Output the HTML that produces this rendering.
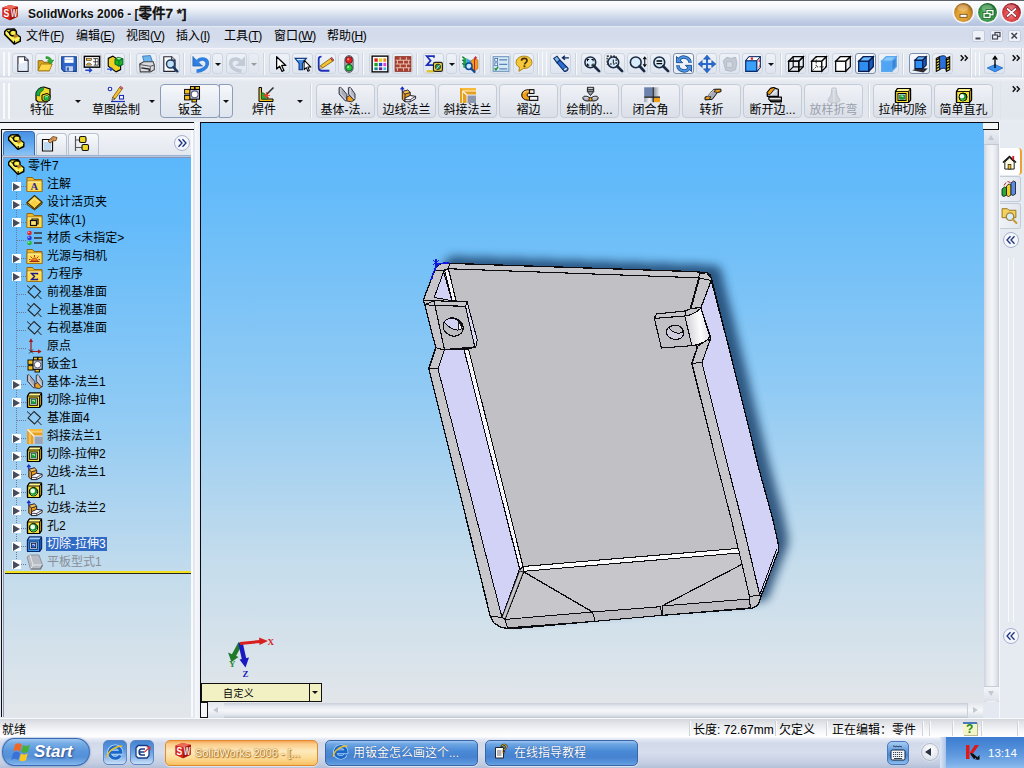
<!DOCTYPE html>
<html lang="zh-CN"><head><meta charset="utf-8"><title>SolidWorks 2006 - [零件7 *]</title>
<style>
*{box-sizing:border-box;margin:0;padding:0}
html,body{width:1024px;height:768px;overflow:hidden;background:#e3e8f0}
body{position:relative;font:12px/14px "Liberation Sans","Noto Sans CJK SC",sans-serif;color:#000}
.a{position:absolute}
.t{position:absolute;white-space:nowrap}
svg{position:absolute;overflow:visible}
#title{left:0;top:0;width:1024px;height:26px;background:linear-gradient(#5e646c 0,#5e646c 1px,#fdfeff 1px,#f2f5fa 8px,#d6dfee 15px,#bfcce3 21px,#b5c4de 25px,#bac8e0 26px)}
#title .tx{left:28px;top:6px;font:bold 12px/16px "Liberation Sans","Noto Sans CJK SC",sans-serif;color:#111;text-shadow:1px 1px 1px rgba(255,255,255,.7)}
#menu{left:0;top:26px;width:1024px;height:22px;background:linear-gradient(#e8edf6 0,#d3dbec 2px,#d4dcec 12px,#dbe2ef 20px,#e0e6f0 22px)}
#menu .t{top:3px;line-height:15px}
#tb1{left:0;top:48px;width:1024px;height:31px;background:linear-gradient(#f6f8fb 0,#e7ebf2 2px,#e1e6ee 26px,#d4dae4 29px,#f4f6fa 30px)}
#tb2{left:0;top:79px;width:1024px;height:43px;background:linear-gradient(#eef1f6 0,#e4e8ef 3px,#e2e6ed 38px,#e9edf3 43px)}
.b1{position:absolute;top:5px;width:21px;height:21px;border:1px solid #cdd5e1;border-radius:3px;background:linear-gradient(#eef2f8,#dfe5ef)}
.b1.on{border-color:#7d8ea8;background:linear-gradient(#f7f9fc,#e8edf5)}
.b1d{position:absolute;top:5px;width:11px;height:21px;border:1px solid #cdd5e1;border-radius:3px;background:linear-gradient(#eef2f8,#dfe5ef)}
.b1d:after,.dd:after{content:"";position:absolute;left:2px;top:9px;border:3px solid transparent;border-top:3px solid #111;border-bottom:0}
.sep1{position:absolute;top:5px;width:2px;height:22px;border-left:1px solid #cfd6e0;border-right:1px solid #f7f9fc}
.grip{position:absolute;width:7px;border-left:2px solid #f8fafc;border-right:2px solid #f8fafc}
.b2{position:absolute;top:5px;width:59px;height:34px;border:1px solid #c5ccd8;border-radius:4px;background:linear-gradient(#f0f2f7,#e4e8ef 55%,#dadfe8);text-align:center}
.b2 .l{position:absolute;left:-10px;right:-10px;top:18px;text-align:center;font-size:12px;line-height:14px;white-space:nowrap}
.b2 svg{left:20px;top:1px}
.g2{position:absolute;top:5px;height:34px;text-align:center}
.g2 .l{position:absolute;left:-20px;right:-20px;top:19px;text-align:center;white-space:nowrap}
.dd{position:absolute;width:9px;height:9px}
.dd:after{left:1px;top:3px;border-width:3px 3px 0 3px;border-top-color:#111}
.chev{position:absolute;font:bold 12px/12px "Liberation Sans",sans-serif;letter-spacing:-2px;color:#111}
</style></head><body>
<div id="title" class="a"><svg style="left:2px;top:4px" width="17" height="17" viewBox="0 0 16 16" ><path d="M.500 3.300L6.900.900l8 1.800-.300 9.400-7.100 3.300-7-3.300z" fill="#c81c14"/><path d="M.500 3.300L6.900.900l8 1.800-6.800 2.400z" fill="#ec6a58"/><path d="M8.100 5.100l6.800-2.400-.300 9.400-7.100 3.300z" fill="#a01410"/><path d="M.500 3.300l7.600 1.800-.600 10.300-7-3.300z" fill="#d4241a"/><text x="1.300" y="12.600" font-family="Liberation Sans,sans-serif" font-weight="bold" font-size="10.500" textLength="5.400" lengthAdjust="spacingAndGlyphs" fill="#fff">S</text><text x="8.300" y="12" font-family="Liberation Sans,sans-serif" font-weight="bold" font-size="9.500" textLength="6.200" lengthAdjust="spacingAndGlyphs" fill="#f4e4e0">W</text></svg><div class="t tx">SolidWorks 2006 - [<span style="font-size:13.500px;-webkit-text-stroke:.300px #111">零件7 *]</span></div><svg style="left:951.5px;top:1px" width="23" height="23" viewBox="0 0 23 23"><defs><radialGradient id="g963" cx=".45" cy=".6" r=".6"><stop offset="0" stop-color="#f0b848"/><stop offset=".55" stop-color="#dc9c30"/><stop offset=".85" stop-color="#b87a24"/><stop offset="1" stop-color="#80561c"/></radialGradient></defs><circle cx="11.500" cy="11.500" r="11" fill="#fff" opacity=".75"/><circle cx="11.500" cy="11.500" r="9.400" fill="url(#g963)"/><ellipse cx="11" cy="7" rx="5.500" ry="3.500" fill="#fff" opacity=".25"/><rect x="8" y="13.300" width="7" height="3" fill="#fff" stroke="#6a4410" stroke-width=".800"/></svg><svg style="left:975.5px;top:1px" width="23" height="23" viewBox="0 0 23 23"><defs><radialGradient id="g987" cx=".45" cy=".6" r=".6"><stop offset="0" stop-color="#7cc488"/><stop offset=".55" stop-color="#3c9c4c"/><stop offset=".85" stop-color="#2a8038"/><stop offset="1" stop-color="#145a24"/></radialGradient></defs><circle cx="11.500" cy="11.500" r="11" fill="#fff" opacity=".75"/><circle cx="11.500" cy="11.500" r="9.400" fill="url(#g987)"/><ellipse cx="11" cy="7" rx="5.500" ry="3.500" fill="#fff" opacity=".25"/><rect x="11" y="9.500" width="6" height="4.300" fill="none" stroke="#0c4a1c" stroke-width="2.600"/><rect x="8" y="12.500" width="6" height="4" fill="none" stroke="#0c4a1c" stroke-width="2.600"/><rect x="11" y="9.500" width="6" height="4.300" fill="#2a8038" stroke="#fff" stroke-width="1.300"/><rect x="8" y="12.500" width="6" height="4" fill="#2a8038" stroke="#fff" stroke-width="1.300"/></svg><svg style="left:999.5px;top:1px" width="23" height="23" viewBox="0 0 23 23"><defs><radialGradient id="g1011" cx=".45" cy=".6" r=".6"><stop offset="0" stop-color="#f08888"/><stop offset=".55" stop-color="#e04848"/><stop offset=".85" stop-color="#c02c34"/><stop offset="1" stop-color="#7c1424"/></radialGradient></defs><circle cx="11.500" cy="11.500" r="11" fill="#fff" opacity=".75"/><circle cx="11.500" cy="11.500" r="9.400" fill="url(#g1011)"/><ellipse cx="11" cy="7" rx="5.500" ry="3.500" fill="#fff" opacity=".25"/><path d="M7.500 8l8 7M15.500 8l-8 7" stroke="#7c1424" stroke-width="3.200" stroke-linecap="round"/><path d="M7.500 8l8 7M15.500 8l-8 7" stroke="#fff" stroke-width="1.800" stroke-linecap="round"/></svg></div><div id="menu" class="a"><svg style="left:4px;top:2px" width="17" height="17" viewBox="0 0 16.500 16" ><path d="M.7 3.200L3 .900l7-.300 2 2.600v2.800l3.800 2.500v4L10 15.400.700 6z" fill="#f6e428" stroke="#000" stroke-width="1.400" stroke-linejoin="round"/><path d="M1.800 3.800l8.400 8.200 5-2.800" fill="none" stroke="#fffbb0" stroke-width="1.100"/><path d="M10.200 12v3" stroke="#000" stroke-width="1.100"/><path d="M8 7l3.500-1.500 2.500 2-3.500 2z" fill="#b8802c"/><path d="M7.800 3c1.500-.600 3.200.400 2.700 2-.400 1.200-2 1.600-3 .900z" fill="#f8f060"/><path d="M10.800 2.400c-2.500-1.700-6.200.300-5.200 3.100.500 1.500 2.200 2.100 3.700 1.500" fill="none" stroke="#000" stroke-width="1.400"/><path d="M3 2.500l2.500 2.500" stroke="#000" stroke-width="1"/></svg><div class="t" style="left:26px">文件<span style="letter-spacing:-.5px">(<u>F</u>)</span></div><div class="t" style="left:76px">编辑<span style="letter-spacing:-.5px">(<u>E</u>)</span></div><div class="t" style="left:126px">视图<span style="letter-spacing:-.5px">(<u>V</u>)</span></div><div class="t" style="left:176px">插入<span style="letter-spacing:-.5px">(<u>I</u>)</span></div><div class="t" style="left:224px">工具<span style="letter-spacing:-.5px">(<u>T</u>)</span></div><div class="t" style="left:274px">窗口<span style="letter-spacing:-.5px">(<u>W</u>)</span></div><div class="t" style="left:327px">帮助<span style="letter-spacing:-.5px">(<u>H</u>)</span></div><div class="a" style="left:972px;top:4px;width:13px;height:12px;border:1px solid #c2ccda;border-radius:2px;background:#eef2f8"></div><svg style="left:972px;top:4px" width="13" height="12" viewBox="0 0 13 12" ><rect x="3.500" y="7.500" width="5" height="2" fill="#445"/></svg><div class="a" style="left:990px;top:4px;width:13px;height:12px;border:1px solid #c2ccda;border-radius:2px;background:#eef2f8"></div><svg style="left:990px;top:4px" width="13" height="12" viewBox="0 0 13 12" ><rect x="5" y="2.500" width="5" height="4" fill="none" stroke="#445" stroke-width="1.200"/><rect x="2.500" y="5" width="5" height="4" fill="#eef2f8" stroke="#445" stroke-width="1.200"/></svg><div class="a" style="left:1008px;top:4px;width:13px;height:12px;border:1px solid #c2ccda;border-radius:2px;background:#eef2f8"></div><svg style="left:1008px;top:4px" width="13" height="12" viewBox="0 0 13 12" ><path d="M3.500 3l5.500 5.500M9 3L3.500 8.500" stroke="#445" stroke-width="1.600"/></svg></div><div id="tb1" class="a"><div class="grip" style="left:3px;top:4px;height:24px"></div><div class="b1" style="left:12px"></div><svg style="left:13.5px;top:6.5px" width="18" height="18" viewBox="0 0 16 16" ><path d="M3.5 1.5h6l3 3v10h-9z" fill="#fff" stroke="#223" stroke-width="1"/><path d="M9.5 1.5v3h3" fill="#dfe8f5" stroke="#223"/><path d="M4 8l8-2v8H4z" fill="#dbe7f6" opacity=".8"/></svg><div class="b1" style="left:35px"></div><svg style="left:36.5px;top:6.5px" width="18" height="18" viewBox="0 0 16 16" ><path d="M1 5h4l1 1.5h5V14H1z" fill="#d9a520" stroke="#8a6208" stroke-width=".8"/><path d="M1 14l2.5-6h10L11 14z" fill="#ffd84a" stroke="#a47810" stroke-width=".8"/><path d="M8 1.5c3 0 4.500 1 5 3.500l1.800-.5-2.500 3.500-3-2.800 1.800-.2c-.4-1.500-1.600-2-3.100-2z" fill="#2fb52f" stroke="#137a13" stroke-width=".6"/></svg><div class="b1" style="left:58px"></div><svg style="left:59.5px;top:6.5px" width="18" height="18" viewBox="0 0 16 16" ><path d="M1.500 1.500h13v13h-11l-2-2z" fill="#2d66c8" stroke="#173f8e"/><rect x="4" y="2" width="8" height="5" fill="#fff"/><rect x="4.500" y="3.500" width="7" height="1" fill="#c9d5ea"/><rect x="5" y="10" width="6.500" height="4.500" fill="#c8d2e4"/><rect x="6" y="11" width="2" height="3" fill="#2d66c8"/></svg><div class="b1" style="left:81px"></div><svg style="left:82.5px;top:6.5px" width="18" height="18" viewBox="0 0 16 16" ><rect x="1.200" y="1.200" width="13.600" height="9.600" fill="#fff" stroke="#000" stroke-width="1.300"/><rect x="3" y="3" width="4.500" height="2" fill="#f0c040" stroke="#222" stroke-width=".500"/><path d="M9 3.200h4.500v5.800H9.500M11 3.200v5.800M9 6h4.500" fill="none" stroke="#222" stroke-width=".700"/><path d="M3 9c0-2.500 4.500-2.500 4.500 0z" fill="#f0c040" stroke="#222" stroke-width=".500"/><path d="M2 13.500h5M5.500 11.800l2 1.700-2 1.700" fill="none" stroke="#2244cc" stroke-width="1.300"/></svg><div class="b1" style="left:104px"></div><svg style="left:105.5px;top:6.5px" width="18" height="18" viewBox="0 0 16 16" ><path d="M2 3l4-2 3 2v3l4 3v4l-4 2-7-5z" fill="#f0d020" stroke="#000" stroke-width="1"/><path d="M8 4l3-2 4 1.500v5L11.500 10 8 8z" fill="#22b422" stroke="#063" stroke-width=".9"/><path d="M8 4l3.500 1.300L15 3.500M11.500 5.300V10" fill="none" stroke="#063" stroke-width=".7"/><path d="M9.500 3l2-.8 2 .8-2 .9z" fill="#aef0ae"/><path d="M1 12.500h4M3.800 10.900l1.800 1.600-1.800 1.600" fill="none" stroke="#2244cc" stroke-width="1.200"/></svg><div class="sep1" style="left:129px"></div><div class="b1" style="left:136px"></div><svg style="left:137.5px;top:6.5px" width="18" height="18" viewBox="0 0 16 16" ><path d="M4 1l7-.5 2 6H5.500z" fill="#6ab4f0" stroke="#2a6cb0" stroke-width=".7"/><path d="M1.500 8l3.500-2h8.500l1 3v4l-3.500 2H2z" fill="#d8dce2" stroke="#444" stroke-width=".9"/><path d="M1.500 8.500l9.500 1.500 3.500-1" fill="none" stroke="#444" stroke-width=".8"/><path d="M3 11.500l7 1v2" fill="none" stroke="#222" stroke-width="1.200"/><path d="M11 10v5" stroke="#555" stroke-width=".7"/></svg><div class="b1" style="left:159px"></div><svg style="left:160.5px;top:6.5px" width="18" height="18" viewBox="0 0 16 16" ><path d="M2.500 1.500h7l3 3v10h-10z" fill="#fff" stroke="#223"/><path d="M9.500 1.500v3h3" fill="#e4ebf6" stroke="#223"/><circle cx="8.500" cy="8" r="3.600" fill="#bfe0f7" stroke="#1d3a63" stroke-width="1.300"/><path d="M11 10.800l3.500 3.700" stroke="#1d3a63" stroke-width="2.200" stroke-linecap="round"/></svg><div class="sep1" style="left:183px"></div><div class="b1" style="left:190px"></div><svg style="left:191.5px;top:6.5px" width="18" height="18" viewBox="0 0 16 16" ><path d="M5 5.500C8 2 14.500 3.500 13.500 8.500 13 11.500 9 14 4 14.500" fill="none" stroke="#2f7fe0" stroke-width="3.200"/><path d="M.800 1v8.800h8.800z" fill="#2f7fe0"/><path d="M.800 1v8.800h8.800" fill="none" stroke="#1a55a8" stroke-width=".600"/></svg><div class="b1d" style="left:212px"></div><div class="b1" style="left:226px"></div><svg style="left:227.5px;top:6.5px" width="18" height="18" viewBox="0 0 16 16" ><path d="M11 5.500C8 2 1.500 3.500 2.500 8.500 3 11.500 7 14 12 14.500" fill="none" stroke="#c4cbd6" stroke-width="3.200"/><path d="M15.200 1v8.800H6.400z" fill="#c4cbd6"/></svg><div class="b1d" style="left:248px;opacity:.35"></div><div class="sep1" style="left:263px"></div><div class="b1" style="left:269px"></div><svg style="left:270.5px;top:6.5px" width="18" height="18" viewBox="0 0 16 16" ><path d="M5 1.500v11l2.700-2.500 2 4.500 1.800-.8-2-4.400h3.700z" fill="#fff" stroke="#000" stroke-width="1.100" stroke-linejoin="round"/></svg><div class="b1" style="left:292px"></div><svg style="left:293.5px;top:6.5px" width="18" height="18" viewBox="0 0 16 16" ><path d="M1 3h10L7.500 7.500V13h-3V7.500z" fill="#3f8ae0" stroke="#0d3a80" stroke-width="1"/><path d="M2.500 4h7" stroke="#cfe4ff" stroke-width="1"/><path d="M9 4.500v8.500l2-1.800 1.400 3.300 1.300-.6-1.400-3.200h2.700z" fill="#fff" stroke="#000" stroke-width=".9" stroke-linejoin="round"/></svg><div class="b1" style="left:315px"></div><svg style="left:316.5px;top:6.5px" width="18" height="18" viewBox="0 0 16 16" ><path d="M11 14H4.500C2.500 14 1.500 13 1.500 11V3.500C1.500 2 2.500 1.500 4 1.500" fill="none" stroke="#1c2fb8" stroke-width="1.600"/><path d="M3 9.500L12 3l2 2.500L5 11.500z" fill="#f2c330" stroke="#7a5a08" stroke-width=".7"/><path d="M12 3l1-1 2 2.500-1 1z" fill="#e05858" stroke="#7a2a2a" stroke-width=".6"/><path d="M3 9.500l-.8 2.600L5 11.500z" fill="#f3dcb0" stroke="#7a5a08" stroke-width=".5"/></svg><div class="b1" style="left:338px"></div><svg style="left:339.5px;top:6.5px" width="18" height="18" viewBox="0 0 16 16" ><rect x="4.300" y="0.500" width="7.400" height="15" rx="3.700" fill="#a8acb4" stroke="#5a5e68" stroke-width=".800"/><circle cx="8" cy="4.500" r="3" fill="#e82020" stroke="#4a1010" stroke-width=".700"/><circle cx="8" cy="11.300" r="3" fill="#22c83c" stroke="#0a3a14" stroke-width=".700"/><circle cx="7.300" cy="3.800" r=".9" fill="#ff9a9a"/><circle cx="7.300" cy="10.600" r=".9" fill="#b4ffb4"/></svg><div class="sep1" style="left:362px"></div><div class="b1" style="left:369px"></div><svg style="left:370.5px;top:6.5px" width="18" height="18" viewBox="0 0 16 16" ><rect x="1" y="1" width="14" height="14" fill="#fff" stroke="#000" stroke-width="1.200"/><rect x="3" y="3" width="3" height="3" fill="#e02020"/><rect x="7" y="3" width="3" height="3" fill="#e8d020"/><rect x="11" y="3" width="2.500" height="3" fill="#e88a20"/><rect x="3" y="7" width="3" height="3" fill="#20a020"/><rect x="7" y="7" width="3" height="3" fill="#2040d0"/><rect x="11" y="7" width="2.500" height="3" fill="#e040e0"/><rect x="3" y="11" width="3" height="2.500" fill="#108a8a"/><rect x="7" y="11" width="3" height="2.500" fill="#702090"/><rect x="11" y="11" width="2.500" height="2.500" fill="#40c0e0"/></svg><div class="b1" style="left:392px"></div><svg style="left:393.5px;top:6.5px" width="18" height="18" viewBox="0 0 16 16" ><rect x="1" y="1.500" width="14" height="13" fill="#a8402f"/><path d="M1 4.700h14M1 8h14M1 11.300h14M5.500 1.500v3.200M11 1.500v3.200M3 4.700V8M8.500 4.700V8M13 4.700V8M5.500 8v3.300M11 8v3.300M3 11.300v3.200M8.500 11.300v3.200M13 11.300v3.200" stroke="#e8c0b4" stroke-width=".9"/><rect x="1" y="1.500" width="14" height="13" fill="none" stroke="#8a2c24" stroke-width=".8"/></svg><div class="sep1" style="left:416px"></div><div class="b1" style="left:423px"></div><svg style="left:424.5px;top:6.5px" width="18" height="18" viewBox="0 0 16 16" ><path d="M8 2.500V1H1.500l3.500 4-3.500 4H8V7.500" fill="none" stroke="#1c2fb8" stroke-width="1.500"/><path d="M1.500 14.500H8" stroke="#e0c020" stroke-width="2"/><rect x="7.500" y="6.500" width="8" height="8" rx="1.500" fill="#e8d040" stroke="#222" stroke-width="1"/><circle cx="11.500" cy="10.500" r="2.400" fill="#3a8a5a" stroke="#222" stroke-width=".7"/><path d="M10 12.500l3-3.500" stroke="#9fd" stroke-width=".8"/></svg><div class="b1d" style="left:446px"></div><div class="b1" style="left:459px"></div><svg style="left:460.5px;top:6.5px" width="18" height="18" viewBox="0 0 16 16" ><path d="M2 2l3 1v9l-3-1z" fill="#20a840"/><path d="M5 3l4 2v8l-4-1z" fill="#38a0e8"/><path d="M9 5l3-2 3 1.500V12l-3 2.500-3-1.500z" fill="#f0a020" stroke="#a05808" stroke-width=".5"/><path d="M12 3v11" stroke="#d02020" stroke-width="1"/><path d="M1 1.500l2 1M1 4.500l2 1M1 7.500l2 1" stroke="#0a6a2a" stroke-width="1"/><circle cx="7" cy="10" r="2.800" fill="#c8e8ff" stroke="#114a9a" stroke-width="1.300"/><path d="M9 12l3 3" stroke="#114a9a" stroke-width="2" stroke-linecap="round"/><path d="M13 1v3M11.500 2.500h3" stroke="#c02020" stroke-width=".8"/></svg><div class="sep1" style="left:483px"></div><div class="b1" style="left:490px"></div><svg style="left:491.5px;top:6.5px" width="18" height="18" viewBox="0 0 16 16" ><rect x="1" y="1.500" width="14" height="13" fill="#d4e8f8" stroke="#6890b8" stroke-width=".9"/><rect x="2.500" y="3" width="2.500" height="2.500" fill="#fff" stroke="#3a66a0" stroke-width=".7"/><rect x="2.500" y="7" width="2.500" height="2.500" fill="#fff" stroke="#3a66a0" stroke-width=".7"/><path d="M2.300 11.800l1.200 1.400 2-2.800" fill="none" stroke="#1a8a2a" stroke-width="1.200"/><path d="M6.500 4.300h7M6.500 8.300h7M6.500 12.300h7" stroke="#5a84b4" stroke-width="1"/></svg><div class="b1" style="left:513px"></div><svg style="left:514.5px;top:6.5px" width="18" height="18" viewBox="0 0 16 16" ><path d="M8 1C3.800 1 1 3.500 1 6.500c0 2 1.200 3.600 3 4.500L3.500 14.500 7.500 12c.2 0 .3 0 .5 0 4.200 0 7-2.500 7-5.500S12.200 1 8 1z" fill="#f4c838" stroke="#a87808" stroke-width=".8"/><path d="M5.800 5.200C5.800 3.800 6.800 3 8.200 3c1.500 0 2.500.8 2.500 2 0 1.800-2.200 1.700-2.200 3.500" fill="none" stroke="#4a3000" stroke-width="1.500"/><circle cx="8.400" cy="10" r=".95" fill="#4a3000"/></svg><div class="sep1" style="left:537px"></div><div class="grip" style="left:542px;top:4px;height:24px;width:5px;border-width:1px"></div><div class="b1" style="left:550px"></div><svg style="left:551.5px;top:6.5px" width="18" height="18" viewBox="0 0 16 16" ><path d="M1.500 3l3-2 2.500 3.500L4.500 7z" fill="#7ab8f0" stroke="#0d2a60" stroke-width=".9"/><path d="M4.500 7L7 4.500l7 7c.8.800 0 2.300-1 2.800-1.200.6-2.300.3-2.800-.5z" fill="#2a70d8" stroke="#0d2a60" stroke-width=".9"/><ellipse cx="12" cy="12.500" rx="2" ry="1.400" transform="rotate(-40 12 12.500)" fill="#c8e4ff" stroke="#0d2a60" stroke-width=".7"/><path d="M15 2.500H9.500M11.500.700L9.300 2.500l2.200 1.800" fill="none" stroke="#0d2a60" stroke-width="1.200"/></svg><div class="sep1" style="left:575px"></div><div class="b1" style="left:581px"></div><svg style="left:582.5px;top:6.5px" width="18" height="18" viewBox="0 0 16 16" ><circle cx="6.500" cy="6.500" r="4.800" fill="#d8ecfb" stroke="#1a2a44" stroke-width="1.400"/><path d="M10 10l4.300 4.300" stroke="#1a2a44" stroke-width="2.400" stroke-linecap="round"/><path d="M4 5.500V4h1.500M7.500 4H9v1.500M9 7.500V9H7.500M5.500 9H4V7.500" fill="none" stroke="#000" stroke-width=".9"/></svg><div class="b1" style="left:604px"></div><svg style="left:605.5px;top:6.5px" width="18" height="18" viewBox="0 0 16 16" ><circle cx="6.500" cy="6.500" r="4.800" fill="#d8ecfb" stroke="#1a2a44" stroke-width="1.400"/><path d="M10 10l4.300 4.300" stroke="#1a2a44" stroke-width="2.400" stroke-linecap="round"/><rect x="1" y="1" width="8" height="7" fill="none" stroke="#000" stroke-width=".9" stroke-dasharray="1.500 1.200"/><path d="M6.500 4v3.500" stroke="#000" stroke-width=".8"/></svg><div class="b1" style="left:627px"></div><svg style="left:628.5px;top:6.5px" width="18" height="18" viewBox="0 0 16 16" ><circle cx="6" cy="6.500" r="4.800" fill="#d8ecfb" stroke="#1a2a44" stroke-width="1.400"/><path d="M9.500 10l4 4.300" stroke="#1a2a44" stroke-width="2.400" stroke-linecap="round"/><path d="M14 2v8M12.600 3.800L14 1.800l1.400 2M12.600 8.200L14 10.200l1.400-2" fill="none" stroke="#000" stroke-width=".9"/></svg><div class="b1" style="left:650px"></div><svg style="left:651.5px;top:6.5px" width="18" height="18" viewBox="0 0 16 16" ><circle cx="6.500" cy="6.500" r="4.800" fill="#d8ecfb" stroke="#1a2a44" stroke-width="1.400"/><path d="M10 10l4.300 4.300" stroke="#1a2a44" stroke-width="2.400" stroke-linecap="round"/><path d="M4 5.300h5M4 7.700h5" stroke="#000" stroke-width="1.200"/></svg><div class="b1 on" style="left:673px"></div><svg style="left:674.5px;top:6.5px" width="18" height="18" viewBox="0 0 16 16" ><path d="M13.500 7A5.600 5.600 0 0 0 3.300 4.300" fill="none" stroke="#1a4a8a" stroke-width="3"/><path d="M2.500 9A5.600 5.600 0 0 0 12.700 11.700" fill="none" stroke="#1a4a8a" stroke-width="3"/><path d="M1.300 1.300v5.500h5.500z" fill="#4a90e0" stroke="#1a4a8a" stroke-width=".800"/><path d="M14.700 14.700V9.200H9.200z" fill="#4a90e0" stroke="#1a4a8a" stroke-width=".800"/><path d="M13.500 7A5.600 5.600 0 0 0 3.300 4.300" fill="none" stroke="#4a90e0" stroke-width="1.700"/><path d="M2.500 9A5.600 5.600 0 0 0 12.700 11.700" fill="none" stroke="#4a90e0" stroke-width="1.700"/></svg><div class="b1" style="left:696px"></div><svg style="left:697.5px;top:6.5px" width="18" height="18" viewBox="0 0 16 16" ><path d="M8 2v12M2 8h12" stroke="#2a6ad0" stroke-width="1.800"/><path d="M8 0l3.200 3.800H4.800zM8 16l3.200-3.800H4.800zM0 8l3.800-3.200v6.400zM16 8l-3.800-3.200v6.400z" fill="#2a6ad0" stroke="#1a4a9a" stroke-width=".400"/></svg><div class="b1" style="left:719px"></div><svg style="left:720.5px;top:6.5px" width="18" height="18" viewBox="0 0 16 16" ><path d="M2 5l3-3 4 1 4-1 1 5-1 6-4 1.500-5-1z" fill="#c4cad4" stroke="#b0b8c4" stroke-width=".8"/><path d="M5 6h5v5H5z" fill="#d8dce4" stroke="#b0b8c4" stroke-width=".7"/></svg><div class="b1" style="left:742px"></div><svg style="left:743.5px;top:6.5px" width="18" height="18" viewBox="0 0 16 16" ><path d="M1.500 5l3-3.500h10v9.500l-3 3.500h-10z" fill="#2d8cf0" stroke="#0a2a66" stroke-width="1"/><path d="M1.500 5h10l3-3.500M11.500 5v9.500" fill="none" stroke="#0a2a66" stroke-width="1"/><path d="M4.500 1.500h10l-3 3.500h-10z" fill="#fff" stroke="#0a2a66" stroke-width=".8"/><path d="M11.500 5l3-3.500v9.500l-3 3.500z" fill="#f4f4f8" stroke="#0a2a66" stroke-width=".8"/><path d="M12.500 5.500l1.500-1.800v2.500zM12.500 12l1.500-1.800V8z" fill="#e02020"/><path d="M6 2.200h2v2H6z" fill="#e02020"/><path d="M2.500 6l8 0v7.500h-8z" fill="#3aa0f8"/></svg><div class="b1d" style="left:765px"></div><div class="sep1" style="left:780px"></div><div class="b1" style="left:785px"></div><svg style="left:786.5px;top:6.5px" width="18" height="18" viewBox="0 0 16 16" ><path d="M1.500 5.500h9v9h-9z" fill="none" stroke="#000" stroke-width="1.100"/><path d="M1.500 5.500l4-4h9l-4 4z" fill="none" stroke="#000" stroke-width="1.100"/><path d="M10.500 5.500l4-4v9l-4 4z" fill="none" stroke="#000" stroke-width="1.100"/><path d="M5.500 1.500v9h9M5.500 10.500l-4 4" fill="none" stroke="#000" stroke-width="1"/></svg><div class="b1" style="left:808px"></div><svg style="left:809.5px;top:6.5px" width="18" height="18" viewBox="0 0 16 16" ><path d="M1.500 5.500h9v9h-9z" fill="#fff" stroke="#000" stroke-width="1.100"/><path d="M1.500 5.500l4-4h9l-4 4z" fill="#fff" stroke="#000" stroke-width="1.100"/><path d="M10.500 5.500l4-4v9l-4 4z" fill="#fff" stroke="#000" stroke-width="1.100"/><path d="M5.500 1.500v9h9M5.500 10.500l-4 4" fill="none" stroke="#000" stroke-width=".8" stroke-dasharray="1.200 1.200"/></svg><div class="b1" style="left:832px"></div><svg style="left:833.5px;top:6.5px" width="18" height="18" viewBox="0 0 16 16" ><path d="M1.500 5.500h9v9h-9z" fill="#fff" stroke="#000" stroke-width="1.100"/><path d="M1.500 5.500l4-4h9l-4 4z" fill="#fff" stroke="#000" stroke-width="1.100"/><path d="M10.500 5.500l4-4v9l-4 4z" fill="#f2f2f2" stroke="#000" stroke-width="1.100"/></svg><div class="b1 on" style="left:855px"></div><svg style="left:856.5px;top:6.5px" width="18" height="18" viewBox="0 0 16 16" ><path d="M1.500 5.500h9v9h-9z" fill="#2f8ff0" stroke="#06184a" stroke-width="1.100"/><path d="M1.500 5.500l4-4h9l-4 4z" fill="#6ab8ff" stroke="#06184a" stroke-width="1.100"/><path d="M10.500 5.500l4-4v9l-4 4z" fill="#1a5ab8" stroke="#06184a" stroke-width="1.100"/></svg><div class="b1" style="left:878px"></div><svg style="left:879.5px;top:6.5px" width="18" height="18" viewBox="0 0 16 16" ><path d="M1.500 5.500h9v9h-9z" fill="#4fa4f4" stroke="#5aa8f0" stroke-width="1.100"/><path d="M1.500 5.500l4-4h9l-4 4z" fill="#8acafc" stroke="#5aa8f0" stroke-width="1.100"/><path d="M10.500 5.500l4-4v9l-4 4z" fill="#3a84d8" stroke="#5aa8f0" stroke-width="1.100"/></svg><div class="sep1" style="left:902px"></div><div class="b1 on" style="left:909px"></div><svg style="left:910.5px;top:6.5px" width="18" height="18" viewBox="0 0 16 16" ><path d="M1 13.500l5-2 9 .5-4 3.500z" fill="#2a2a30"/><path d="M3.500 4.500h7v7.500h-7z" fill="#2f8ff0" stroke="#06184a" stroke-width="1"/><path d="M3.500 4.500l3-3h7l-3 3z" fill="#6ab8ff" stroke="#06184a" stroke-width="1"/><path d="M10.500 4.500l3-3V9l-3 3z" fill="#1a5ab8" stroke="#06184a" stroke-width="1"/></svg><div class="b1" style="left:932px"></div><svg style="left:933.5px;top:6.5px" width="18" height="18" viewBox="0 0 16 16" ><path d="M2 3l3-1.500V13L2 14.500z" fill="#f0d020" stroke="#000" stroke-width=".9"/><path d="M2 4.500l3-1.500M2 7l3-1.500M2 9.500l3-1.500M2 12l3-1.500" stroke="#000" stroke-width="1"/><path d="M5 1.500c3-1.500 6-1 6 1.500v11c0-2.500-3-3-6-1z" fill="#2a70d8" stroke="#06184a" stroke-width=".8"/><path d="M11 3l3-1.500V13l-3 1.500z" fill="#f0d020" stroke="#000" stroke-width=".9"/><path d="M11 4.500l3-1.500M11 7l3-1.500M11 9.500l3-1.500M11 12l3-1.500" stroke="#000" stroke-width="1"/></svg><svg style="left:960px;top:6.5px" width="8" height="6" viewBox="0 0 8 6" ><path d="M.700.300L3.300 3 .700 5.700M4.700.300L7.300 3 4.700 5.700" fill="none" stroke="#111" stroke-width="1.500"/></svg><div class="sep1" style="left:970px;top:0;height:30px"></div><div class="grip" style="left:975px;top:4px;height:24px;width:5px;border-width:1px"></div><div class="b1" style="left:984px"></div><svg style="left:985.5px;top:6.5px" width="18" height="18" viewBox="0 0 16 16" ><path d="M1 11.500l7-3 7 3-7 3.500z" fill="#3a94f0" stroke="#1a5ab8" stroke-width=".6"/><path d="M8 11.500V2M6 4.200L8 1.200l2 3" fill="none" stroke="#000" stroke-width="1.200"/></svg><svg style="left:1012px;top:6.5px" width="8" height="6" viewBox="0 0 8 6" ><path d="M.700.300L3.300 3 .700 5.700M4.700.300L7.300 3 4.700 5.700" fill="none" stroke="#111" stroke-width="1.500"/></svg><div class="sep1" style="left:1021px;top:0;height:30px"></div></div><div id="tb2" class="a"><div class="grip" style="left:3px;top:4px;height:36px"></div><div class="g2" style="left:42px;width:0"><div class="l">特征</div></div><svg style="left:34px;top:7px" width="20" height="18" viewBox="0 0 20 18" ><path d="M2 9c0-5 4-8 8-8l6 2v8l-3 5H4l-2-2z" fill="#f0d828" stroke="#000" stroke-width="1.200"/><path d="M2 9c0-4 3-7 7-7.500 1 1 .5 3-1 3.500-2 .8-2.500 2.500-2.500 5z" fill="#22a838" stroke="#063" stroke-width=".8"/><path d="M8 9l5-1.500 3 1.500v5l-4 2-4-2z" fill="#f0d828" stroke="#000" stroke-width="1"/><path d="M10 10.500l3-1 2 1v3l-2.500 1-2.500-1z" fill="#22b838" stroke="#063" stroke-width=".8"/><path d="M11 11l2-.5 1 .5" stroke="#cfc" stroke-width=".8" fill="none"/></svg><div class="dd" style="left:74px;top:18px"></div><div class="g2" style="left:112px;width:0"><div class="l">草图绘制</div></div><svg style="left:107px;top:7px" width="20" height="18" viewBox="0 0 20 18" ><circle cx="3" cy="3" r="1.800" fill="#fff" stroke="#1c2fb8" stroke-width="1.100"/><rect x="12.500" y="9.500" width="4" height="3.500" fill="#fff" stroke="#1c2fb8" stroke-width="1.100"/><path d="M4 15.500h14" stroke="#1c2fb8" stroke-width="1.200"/><path d="M5.500 11.500L12.500 1.500l2.500 1.800L8 13z" fill="#f2c330" stroke="#7a5a08" stroke-width=".8"/><path d="M12.500 1.500l1-1.300 2.500 1.800-1 1.300z" fill="#e87878" stroke="#7a2a2a" stroke-width=".6"/><path d="M5.500 11.500L5 14.500 8 13z" fill="#f3dcb0" stroke="#222" stroke-width=".6"/></svg><div class="dd" style="left:148px;top:18px"></div><div class="b2" style="left:160px;width:60px;border-color:#8a9cb8;background:linear-gradient(#f6f8fb,#e6ebf3 60%,#dfe5ee)"></div><div class="b2" style="left:219px;width:14px;border-color:#8a9cb8;background:linear-gradient(#f6f8fb,#e6ebf3 60%,#dfe5ee);border-radius:0 4px 4px 0"></div><div class="g2" style="left:190px;width:0"><div class="l">钣金</div></div><svg style="left:182px;top:7px" width="20" height="18" viewBox="0 0 20 18" ><g transform="translate(.500 -.800) scale(1.05)"><rect x="7.600" y="1.200" width="3.800" height="3.200" fill="#f4c020" stroke="#000" stroke-width=".900"/><rect x="12" y="1.200" width="4.200" height="3.200" fill="#f4c020" stroke="#000" stroke-width=".900"/><rect x="2" y="4" width="5.400" height="4.300" fill="#f4c020" stroke="#000" stroke-width=".900"/><rect x="2" y="9.700" width="5.400" height="4.300" fill="#f4c020" stroke="#000" stroke-width=".900"/><rect x="9" y="13" width="4.400" height="3" fill="#f4c020" stroke="#000" stroke-width=".900"/><rect x="7" y="4" width="9.200" height="9.300" fill="#c4c8d4" stroke="#000" stroke-width="1"/><circle cx="11.600" cy="8.700" r="3.300" fill="#fff" stroke="#5a5a80" stroke-width="1"/></g></svg><div class="dd" style="left:222px;top:18px"></div><div class="g2" style="left:264px;width:0"><div class="l">焊件</div></div><svg style="left:256px;top:7px" width="20" height="18" viewBox="0 0 20 18" ><path d="M3 1.500h2.500V13H17v2.500H3z" fill="#f0c020" stroke="#000" stroke-width="1"/><path d="M5.500 13V6.500c3.500.5 6 3 6.500 6.500z" fill="#28a838" stroke="#063" stroke-width=".8"/><path d="M17.500 1.500L10 9" stroke="#333" stroke-width="1.600"/><path d="M8 7l5 5M8 12l5-5M10.500 6v7M7 9.500h7" stroke="#f04020" stroke-width=".9"/></svg><div class="dd" style="left:296px;top:18px"></div><div class="sep1" style="left:310px;top:5px;height:34px"></div><div class="b2" style="left:316px"><div class="l">基体-法...</div></div><svg style="left:336px;top:8px" width="20" height="17" viewBox="0 0 20 17" ><path d="M3.100.700l1.800-.450 6 7.150V14l-1.900-.300-5.900-6.700z" fill="#a8acb8" stroke="#223" stroke-width=".900" stroke-linejoin="round"/><path d="M4.900.250v6.500L10.900 14" fill="none" stroke="#e8eaf0" stroke-width=".700"/><path d="M10.900 10.100l3.400-2 4.700 4.300-3.400 2.400-4.700-.800z" fill="#f0a020" stroke="#223" stroke-width=".900" stroke-linejoin="round"/><path d="M12.400.700l1.900-.450L19 7v5.400h-1.900L12.400 7z" fill="#b4b8c4" stroke="#223" stroke-width=".900" stroke-linejoin="round"/><path d="M14.300.250v6.500l4.700 5.650" fill="none" stroke="#e8eaf0" stroke-width=".700"/></svg><div class="b2" style="left:377px"><div class="l">边线法兰</div></div><svg style="left:397px;top:8px" width="20" height="17" viewBox="0 0 20 17" ><path d="M5.300 4.600l5.500-1.500 2.400 2.300v3.900L8 14.800l-2.700-2.400z" fill="#e89a18" stroke="#223" stroke-width="1" stroke-linejoin="round"/><path d="M5.300 4.600L8 7l5.200-1.600M8 7v7.800" fill="none" stroke="#223" stroke-width=".800"/><path d="M5.300 4.600L8 7l5.200-1.600-2.400-2.300z" fill="#f8c050" stroke="#223" stroke-width=".700"/><path d="M8 10.900l5.200-2.400 5.400.800v2.400l-5.400 3.100H8z" fill="#f6f6fa" stroke="#223" stroke-width="1" stroke-linejoin="round"/><path d="M8 12.500l5.200.200 5.400-3.400M13.200 12.700v2.100" fill="none" stroke="#223" stroke-width=".800"/><path d="M5.300 4.600V.300M3.600 2.300L5.300.300 7 2.300" fill="none" stroke="#1c2fb8" stroke-width="1.300"/></svg><div class="b2" style="left:438px"><div class="l">斜接法兰</div></div><svg style="left:458px;top:8px" width="20" height="17" viewBox="0 0 20 17" ><rect x="2" y="1" width="16" height="15" fill="#e8a020"/><path d="M2 1h16v3H6.500L2 1z" fill="#f8b838"/><path d="M9 8h9v8H9z" fill="#9aa4b8"/><path d="M9 8l-4.500-4" stroke="#fff" stroke-width="1.200"/><path d="M4.500 4H18M4.500 4v12" stroke="#fff0c8" stroke-width="1"/><path d="M9 8h9M9 8v8" stroke="#e8ecf4" stroke-width="1"/><path d="M10 9h8v7h-8z" fill="#8c98ae"/></svg><div class="b2" style="left:499px"><div class="l">褶边</div></div><svg style="left:519px;top:8px" width="20" height="17" viewBox="0 0 20 17" ><path d="M14.500 2.800H9.500C5 2.800 2.800 5 2.800 8s2.200 5.200 6.700 5.200h1.100V9.800h-.800c-1.200 0-1.600-.800-1.600-1.800s.400-1.800 1.600-1.800h4.700z" fill="#f0a018" stroke="#000" stroke-width="1" stroke-linejoin="round"/><path d="M4.300 6.500c.800-1.600 2.500-2.500 5-2.500" fill="none" stroke="#ffd888" stroke-width="1"/><rect x="10.600" y="2.800" width="4.400" height="3.600" fill="#f8f8fc" stroke="#000" stroke-width="1"/><rect x="10.600" y="9.400" width="8.200" height="4" fill="#f8f8fc" stroke="#000" stroke-width="1"/><path d="M11.500 12.400h6.500" stroke="#b0b4c0" stroke-width="1"/></svg><div class="b2" style="left:560px"><div class="l">绘制的...</div></div><svg style="left:580px;top:8px" width="20" height="17" viewBox="0 0 20 17" ><path d="M7.400.300h6.300v4.300L10.500 8.500 7.400 4.600z" fill="#9a9ea8" stroke="#111" stroke-width=".900" stroke-linejoin="round"/><path d="M7.400 2.600h6.300M7.400 4.600h6.300" stroke="#111" stroke-width=".700"/><path d="M8.500 1.400h4" stroke="#e0e2e8" stroke-width=".900"/><ellipse cx="6.500" cy="11.600" rx="3.800" ry="2.300" transform="rotate(15 6.500 11.600)" fill="#b8bcc6" stroke="#111" stroke-width=".900"/><ellipse cx="14.500" cy="11.600" rx="3.800" ry="2.300" transform="rotate(-15 14.500 11.600)" fill="#b8bcc6" stroke="#111" stroke-width=".900"/><path d="M5 10.500c1-.500 2-.300 3 .300M16 10.500c-1-.500-2-.300-3 .300" stroke="#eceef2" stroke-width=".800" fill="none"/><path d="M10.500 10.300l1.700 1.500-.500 2.200h-2.400l-.500-2.200z" fill="#f0a018" stroke="#111" stroke-width=".800" stroke-linejoin="round"/></svg><div class="b2" style="left:621px"><div class="l">闭合角</div></div><svg style="left:641px;top:8px" width="20" height="17" viewBox="0 0 20 17" ><defs><linearGradient id="cg1" x1="0" x2="1"><stop offset="0" stop-color="#8a90a0"/><stop offset="1" stop-color="#f4f5f8"/></linearGradient><linearGradient id="cg2" x1="0" x2="1"><stop offset="0" stop-color="#9aa0ae"/><stop offset=".6" stop-color="#f4f5f8"/><stop offset="1" stop-color="#b0b4c0"/></linearGradient></defs><rect x="3.200" y=".300" width="8.600" height="9.400" fill="#6a82ac"/><rect x="12.600" y=".300" width="6.400" height="9.400" fill="url(#cg1)"/><rect x="3.200" y="10.500" width="8.600" height="4.700" fill="url(#cg2)"/><rect x="12.600" y="10.500" width="6.400" height="4.700" fill="#f0a018"/><path d="M12.200.300v15M3.200 10.100H19" stroke="#111" stroke-width="1.100"/></svg><div class="b2" style="left:682px"><div class="l">转折</div></div><svg style="left:702px;top:8px" width="20" height="17" viewBox="0 0 20 17" ><path d="M18.800 2.300h-7L5.500 9.500l-2.300.600v2.650l7-.350 5.300-7 3.300-.800z" fill="#a8acb8" stroke="#111" stroke-width="1" stroke-linejoin="round"/><path d="M18.800 2.300h-5l-1.500 2.600 3.200.500 3.300-.800z" fill="#f0a018" stroke="#111" stroke-width=".800" stroke-linejoin="round"/><path d="M3.200 10.100l2.300-.600 3.400.300-1.700 2.750-4 .200z" fill="#f0a018" stroke="#111" stroke-width=".800" stroke-linejoin="round"/><path d="M11.800 2.900L6 9.600" stroke="#eceef2" stroke-width=".800"/></svg><div class="b2" style="left:743px"><div class="l">断开边...</div></div><svg style="left:763px;top:8px" width="20" height="17" viewBox="0 0 20 17" ><path d="M10.600.700l4.700 1.600v7h-11V5.400l3.200-3.900z" fill="#d0d4de" stroke="#000" stroke-width="1.300" stroke-linejoin="round"/><path d="M4.300 5.400l3.200-3.900 3.100-.800 1.500.500L7 7.500 4.300 7z" fill="#f0a018" stroke="#000" stroke-width=".800" stroke-linejoin="round"/><path d="M8 8l6.500-5" stroke="#f4f5f8" stroke-width="1"/><path d="M5.900 10.100h12.500v4.700H8.250L5.900 12.400z" fill="#f6f6fa" stroke="#000" stroke-width="1.200" stroke-linejoin="round"/><path d="M7 14h11.400" stroke="#000" stroke-width="1.600"/><path d="M5.900 12.400h12.500" stroke="#444" stroke-width=".700"/></svg><div class="b2" style="left:804px"><div class="l" style="color:#9aa0aa">放样折弯</div></div><svg style="left:824px;top:8px" width="20" height="17" viewBox="0 0 20 17" ><path d="M8 1h4l1 7 3 5c0 2-2.500 3-6 3s-6-1-6-3l3-5z" fill="#cfd3dc" stroke="#b8bdc8" stroke-width=".8"/><path d="M10 2v13" stroke="#e8eaf0" stroke-width="1"/><ellipse cx="10" cy="2.300" rx="2" ry=".9" fill="#dfe2ea"/></svg><div class="sep1" style="left:868px;top:5px;height:34px"></div><div class="b2" style="left:873px"><div class="l">拉伸切除</div></div><svg style="left:893px;top:8px" width="20" height="17" viewBox="0 0 20 17" ><path d="M2.500 4.500L4.500 1.500h12.500l.500.500V13l-2 2.500H3l-.500-.500z" fill="#f8e030" stroke="#000" stroke-width="1.200" stroke-linejoin="round"/><path d="M2.500 4.500L4.500 1.500h13l-2 3z" fill="#fff48c"/><path d="M15.500 4.500l2-3V13l-2 2.500z" fill="#c8a010"/><path d="M2.500 4.500h13l2-3M15.500 4.500v11" fill="none" stroke="#000" stroke-width=".900"/><path d="M2.500 4.500L4.500 1.500h12.500l.500.500V13l-2 2.500H3l-.500-.500z" fill="none" stroke="#000" stroke-width="1.200" stroke-linejoin="round"/><rect x="5" y="6.500" width="8" height="7" fill="#fbfbf4" stroke="#000" stroke-width="1"/><rect x="6.700" y="8" width="4.800" height="4.200" fill="#18a030" stroke="#063" stroke-width=".700"/><path d="M7.500 9h2.500v1.200" fill="none" stroke="#d8f8d8" stroke-width=".900"/></svg><div class="b2" style="left:934px"><div class="l">简单直孔</div></div><svg style="left:954px;top:8px" width="20" height="17" viewBox="0 0 20 17" ><path d="M2.500 4.500L4.500 1.500h12.500l.500.500V13l-2 2.500H3l-.500-.500z" fill="#f8e030" stroke="#000" stroke-width="1.200" stroke-linejoin="round"/><path d="M2.500 4.500L4.500 1.500h13l-2 3z" fill="#fff48c"/><path d="M15.500 4.500l2-3V13l-2 2.500z" fill="#c8a010"/><path d="M2.500 4.500h13l2-3M15.500 4.500v11" fill="none" stroke="#000" stroke-width=".900"/><path d="M2.500 4.500L4.500 1.500h12.500l.500.500V13l-2 2.500H3l-.500-.500z" fill="none" stroke="#000" stroke-width="1.200" stroke-linejoin="round"/><circle cx="9" cy="10" r="4" fill="#189030" stroke="#000" stroke-width="1"/><circle cx="8" cy="9.200" r="2.200" fill="#f4fff4"/><path d="M6.500 12.300a3.500 3.500 0 0 0 5.500-1" fill="none" stroke="#6d6" stroke-width="1"/></svg><svg style="left:1012px;top:6.5px" width="8" height="6" viewBox="0 0 8 6" ><path d="M.700.300L3.300 3 .700 5.700M4.700.300L7.300 3 4.700 5.700" fill="none" stroke="#111" stroke-width="1.500"/></svg><div class="sep1" style="left:1000px;top:3px;height:38px;border-right:0;border-left-color:#dfe4ec"></div></div><style>
#lp{left:0;top:122px;width:200px;height:597px;background:#e4e8f0}
#tree{left:3px;top:35px;width:188px;height:560px;background:linear-gradient(#5cb8fb 0,#62bafa 10%,#8fcaf4 45%,#c4dcec 75%,#e2e6ea 100%);border-left:1px solid #8a94b4;border-top:1px solid #8c90b8}
.ti{position:absolute;left:42px;height:16px;line-height:16px;font-size:12px;white-space:nowrap;padding:0 1px}
.ex{position:absolute;left:8px;width:9px;height:9px;background:#fff}
.ex:after{content:"";position:absolute;left:1px;top:.5px;border:4px solid transparent;border-left:7px solid #464c5c;border-right:0}
.dot{position:absolute;border:0 dotted #6a7a9a}
</style><div id="lp" class="a"><div class="a" style="left:0;top:0;width:194px;height:1px;background:#111"></div><div class="a" style="left:0;top:1px;width:194px;height:6px;background:#f4f6fa"></div><div class="a" style="left:1px;top:7px;width:193px;height:1px;background:#111"></div><div class="a" style="left:1px;top:7px;width:1px;height:588px;background:#111"></div><div class="a" style="left:2px;top:8px;width:190px;height:27px;background:linear-gradient(#f2f4f8,#e2e6ee)"></div><div class="a" style="left:191px;top:8px;width:2px;height:587px;background:#f8fafc"></div><div class="a" style="left:195px;top:0;width:5px;height:597px;background:linear-gradient(90deg,#f6f8fb,#eceff5)"></div><div class="a" style="left:3px;top:9px;width:32px;height:25px;border-radius:4px 4px 0 0;background:linear-gradient(#4a90e4,#5aa4ee 40%,#8cc4f6);border:1px solid #3a6cb0;border-bottom:0"></div><div class="a" style="left:36px;top:11px;width:31px;height:22px;border-radius:4px 4px 0 0;background:linear-gradient(#f8fafc,#dfe4ec);border:1px solid #b8c2d0;border-bottom:0"></div><div class="a" style="left:68px;top:11px;width:31px;height:22px;border-radius:4px 4px 0 0;background:linear-gradient(#f8fafc,#dfe4ec);border:1px solid #b8c2d0;border-bottom:0"></div><div class="a" style="left:2px;top:33px;width:189px;height:2px;background:linear-gradient(#8aa8d0,#c8d4e4)"></div><svg style="left:8px;top:11.5px" width="16.5" height="16" viewBox="0 0 16.500 16" ><path d="M.7 3.200L3 .900l7-.300 2 2.600v2.800l3.800 2.500v4L10 15.400.700 6z" fill="#f6e428" stroke="#000" stroke-width="1.400" stroke-linejoin="round"/><path d="M1.800 3.800l8.400 8.200 5-2.800" fill="none" stroke="#fffbb0" stroke-width="1.100"/><path d="M10.200 12v3" stroke="#000" stroke-width="1.100"/><path d="M8 7l3.500-1.500 2.500 2-3.500 2z" fill="#b8802c"/><path d="M7.800 3c1.500-.600 3.200.400 2.700 2-.400 1.200-2 1.600-3 .900z" fill="#f8f060"/><path d="M10.800 2.400c-2.500-1.700-6.200.300-5.200 3.100.500 1.500 2.200 2.100 3.700 1.500" fill="none" stroke="#000" stroke-width="1.400"/><path d="M3 2.500l2.500 2.500" stroke="#000" stroke-width="1"/></svg><svg style="left:41px;top:12.5px" width="17" height="17" viewBox="0 0 17 17" ><path d="M1.500 4.500h10V16h-10z" fill="#fff" stroke="#111" stroke-width="1.200"/><path d="M3 8h7M3 10h7M3 12h7M3 14h7" stroke="#78b4e8" stroke-width="1"/><path d="M7 6l5-4.500 4 1-1 3-3 .5-3 2z" fill="#e0a060" stroke="#5a3a10" stroke-width=".8"/><path d="M9 3.500l3 2M10.500 2.500l2.500 2" stroke="#8a5a20" stroke-width=".6"/></svg><svg style="left:73px;top:12.5px" width="17" height="17" viewBox="0 0 17 17" ><path d="M2.500 1v15M2.500 5H7M2.500 12.500H9" stroke="#555" stroke-width="1.200" fill="none"/><rect x="6.500" y="1.500" width="6.500" height="6" rx="1.500" fill="#f0d828" stroke="#111" stroke-width="1.100"/><rect x="9" y="9.500" width="6.500" height="6" rx="1.500" fill="#f0d828" stroke="#111" stroke-width="1.100"/></svg><div class="a" style="left:174px;top:13px;width:16px;height:16px;border:1px solid #a8b0cc;border-radius:8px;background:#f4f6fb"></div><svg style="left:174px;top:13px" width="16" height="16" viewBox="0 0 16 16" ><path d="M4.500 4.200L8 8l-3.500 3.800M8.500 4.200L12 8l-3.500 3.800" fill="none" stroke="#1c3480" stroke-width="1.300"/></svg><div id="tree" class="a"><div class="dot" style="left:12px;top:17px;width:0;height:390px;border-left-width:1px"></div><svg style="left:4px;top:1px" width="16.5" height="16" viewBox="0 0 16.500 16" ><path d="M.7 3.200L3 .900l7-.300 2 2.600v2.800l3.800 2.500v4L10 15.400.700 6z" fill="#f6e428" stroke="#000" stroke-width="1.400" stroke-linejoin="round"/><path d="M1.800 3.800l8.400 8.200 5-2.800" fill="none" stroke="#fffbb0" stroke-width="1.100"/><path d="M10.200 12v3" stroke="#000" stroke-width="1.100"/><path d="M8 7l3.500-1.500 2.500 2-3.500 2z" fill="#b8802c"/><path d="M7.800 3c1.500-.600 3.200.400 2.700 2-.400 1.200-2 1.600-3 .900z" fill="#f8f060"/><path d="M10.800 2.400c-2.500-1.700-6.200.300-5.200 3.100.500 1.500 2.200 2.100 3.700 1.500" fill="none" stroke="#000" stroke-width="1.400"/><path d="M3 2.500l2.500 2.500" stroke="#000" stroke-width="1"/></svg><div class="ti" style="left:23px;top:0px">零件7</div><div class="dot" style="left:13px;top:28px;width:9px;height:0;border-top-width:1px"></div><div class="ex" style="top:24px"></div><svg style="left:22px;top:18px" width="17" height="16" viewBox="0 0 17 16" ><path d="M1 1.500h5.500l1.500 2H16v12H1z" fill="#f0b828" stroke="#8a5c08" stroke-width=".900"/><path d="M1 5h15v10.500H1z" fill="#ffdc50" stroke="#9a6c10" stroke-width=".800"/><path d="M2 6h13" stroke="#fff4b0" stroke-width="1"/><text x="4.500" y="14" font-family="Liberation Serif,serif" font-weight="bold" font-size="10.500" fill="#2a2a9a">A</text></svg><div class="ti" style="top:18px">注解</div><div class="dot" style="left:13px;top:46px;width:9px;height:0;border-top-width:1px"></div><div class="ex" style="top:42px"></div><svg style="left:22px;top:36px" width="17" height="16" viewBox="0 0 17 16" ><path d="M1 8.500l7.500-7 7.500 6.500-7.500 7z" fill="#f8d040" stroke="#3a2a00" stroke-width="1.100"/><path d="M1 8.500v2l7.500 5.500 7.500-6v-2L8.500 15z" fill="#c89818" stroke="#3a2a00" stroke-width=".9"/><path d="M4 8.500l4.500-4 4.500 3.800" fill="none" stroke="#fff0a0" stroke-width="1"/></svg><div class="ti" style="top:36px">设计活页夹</div><div class="dot" style="left:13px;top:64px;width:9px;height:0;border-top-width:1px"></div><div class="ex" style="top:60px"></div><svg style="left:22px;top:54px" width="17" height="16" viewBox="0 0 17 16" ><path d="M1 1.500h5.500l1.500 2H16v12H1z" fill="#f0b828" stroke="#8a5c08" stroke-width=".900"/><path d="M1 5h15v10.500H1z" fill="#ffdc50" stroke="#9a6c10" stroke-width=".800"/><path d="M2 6h13" stroke="#fff4b0" stroke-width="1"/><rect x="4.500" y="8.500" width="6" height="5" fill="#ffe070" stroke="#111" stroke-width="1.200"/><path d="M6 8.500V7h6v5h-1.500" fill="none" stroke="#111" stroke-width="1.200"/></svg><div class="ti" style="top:54px">实体(1)</div><div class="dot" style="left:13px;top:82px;width:9px;height:0;border-top-width:1px"></div><svg style="left:22px;top:72px" width="17" height="16" viewBox="0 0 17 16" ><circle cx="3.500" cy="3" r="2.300" fill="#e02828"/><circle cx="3.500" cy="8" r="2.300" fill="#2838d8"/><circle cx="3.500" cy="13" r="2.300" fill="#28b838"/><circle cx="2.800" cy="2.300" r=".8" fill="#fbb"/><circle cx="2.800" cy="7.300" r=".8" fill="#bbf"/><circle cx="2.800" cy="12.300" r=".8" fill="#bfb"/><path d="M8 3h8M8 8h8M8 13h8" stroke="#333" stroke-width="1.600"/></svg><div class="ti" style="top:72px">材质 &lt;未指定&gt;</div><div class="dot" style="left:13px;top:100px;width:9px;height:0;border-top-width:1px"></div><div class="ex" style="top:96px"></div><svg style="left:22px;top:90px" width="17" height="16" viewBox="0 0 17 16" ><path d="M1 1.500h5.500l1.500 2H16v12H1z" fill="#f0b828" stroke="#8a5c08" stroke-width=".900"/><path d="M1 5h15v10.500H1z" fill="#ffdc50" stroke="#9a6c10" stroke-width=".800"/><path d="M2 6h13" stroke="#fff4b0" stroke-width="1"/><path d="M3.500 13.500h10" stroke="#a02020" stroke-width="1.200"/><path d="M5.500 13c0-4 6-4 6 0z" fill="#f08020" stroke="#a03010" stroke-width=".7"/><path d="M8.500 7v2M4.500 8.500l1.500 1.500M12.500 8.500L11 10M3 11.500h1.500M12.500 11.500H14" stroke="#a02020" stroke-width=".9"/></svg><div class="ti" style="top:90px">光源与相机</div><div class="dot" style="left:13px;top:118px;width:9px;height:0;border-top-width:1px"></div><div class="ex" style="top:114px"></div><svg style="left:22px;top:108px" width="17" height="16" viewBox="0 0 17 16" ><path d="M1 1.500h5.500l1.500 2H16v12H1z" fill="#f0b828" stroke="#8a5c08" stroke-width=".900"/><path d="M1 5h15v10.500H1z" fill="#ffdc50" stroke="#9a6c10" stroke-width=".800"/><path d="M2 6h13" stroke="#fff4b0" stroke-width="1"/><path d="M11.500 8.500V7.500h-6l3 3-3 3h6v-1" fill="none" stroke="#1a1a8a" stroke-width="1.400"/></svg><div class="ti" style="top:108px">方程序</div><div class="dot" style="left:13px;top:136px;width:9px;height:0;border-top-width:1px"></div><svg style="left:22px;top:126px" width="17" height="16" viewBox="0 0 17 16" ><path d="M2 8l6-6.500 6.500 6L8.500 14z" fill="none" stroke="#222" stroke-width="1.100"/><path d="M1 1.500l4 3.500M11.500 11l4 4" stroke="#222" stroke-width="1"/></svg><div class="ti" style="top:126px">前视基准面</div><div class="dot" style="left:13px;top:154px;width:9px;height:0;border-top-width:1px"></div><svg style="left:22px;top:144px" width="17" height="16" viewBox="0 0 17 16" ><path d="M2 8l6-6.500 6.500 6L8.500 14z" fill="none" stroke="#222" stroke-width="1.100"/><path d="M1 1.500l4 3.500M11.500 11l4 4" stroke="#222" stroke-width="1"/></svg><div class="ti" style="top:144px">上视基准面</div><div class="dot" style="left:13px;top:172px;width:9px;height:0;border-top-width:1px"></div><svg style="left:22px;top:162px" width="17" height="16" viewBox="0 0 17 16" ><path d="M2 8l6-6.500 6.500 6L8.500 14z" fill="none" stroke="#222" stroke-width="1.100"/><path d="M1 1.500l4 3.500M11.500 11l4 4" stroke="#222" stroke-width="1"/></svg><div class="ti" style="top:162px">右视基准面</div><div class="dot" style="left:13px;top:190px;width:9px;height:0;border-top-width:1px"></div><svg style="left:22px;top:180px" width="17" height="16" viewBox="0 0 17 16" ><path d="M5 13.500V2M3.500 4L5 1.500 6.500 4" fill="none" stroke="#a01818" stroke-width="1.200"/><path d="M5 13.500h9M12 12l2.500 1.500L12 15" fill="none" stroke="#a01818" stroke-width="1.200"/><path d="M3 11.500l4 4M7 11.500l-4 4" stroke="#222" stroke-width=".9"/></svg><div class="ti" style="top:180px">原点</div><div class="dot" style="left:13px;top:208px;width:9px;height:0;border-top-width:1px"></div><svg style="left:22px;top:198px" width="17" height="16" viewBox="0 0 17 16" ><rect x="7.600" y="1.200" width="3.800" height="3.200" fill="#f4c020" stroke="#000" stroke-width=".900"/><rect x="12" y="1.200" width="4.200" height="3.200" fill="#f4c020" stroke="#000" stroke-width=".900"/><rect x="2" y="4" width="5.400" height="4.300" fill="#f4c020" stroke="#000" stroke-width=".900"/><rect x="2" y="9.700" width="5.400" height="4.300" fill="#f4c020" stroke="#000" stroke-width=".900"/><rect x="9" y="13" width="4.400" height="3" fill="#f4c020" stroke="#000" stroke-width=".900"/><rect x="7" y="4" width="9.200" height="9.300" fill="#c4c8d4" stroke="#000" stroke-width="1"/><circle cx="11.600" cy="8.700" r="3.300" fill="#fff" stroke="#5a5a80" stroke-width="1"/></svg><div class="ti" style="top:198px">钣金1</div><div class="dot" style="left:13px;top:226px;width:9px;height:0;border-top-width:1px"></div><div class="ex" style="top:222px"></div><svg style="left:22px;top:216px" width="17" height="16" viewBox="0 0 17 16" ><g transform="translate(-1.500 .500) scale(.95)"><path d="M3.100.700l1.800-.450 6 7.150V14l-1.900-.300-5.900-6.700z" fill="#a8acb8" stroke="#223" stroke-width=".900" stroke-linejoin="round"/><path d="M4.900.250v6.500L10.900 14" fill="none" stroke="#e8eaf0" stroke-width=".700"/><path d="M10.900 10.100l3.400-2 4.700 4.300-3.400 2.400-4.700-.800z" fill="#f0a020" stroke="#223" stroke-width=".900" stroke-linejoin="round"/><path d="M12.400.700l1.900-.450L19 7v5.400h-1.900L12.400 7z" fill="#b4b8c4" stroke="#223" stroke-width=".900" stroke-linejoin="round"/><path d="M14.300.250v6.500l4.700 5.650" fill="none" stroke="#e8eaf0" stroke-width=".700"/></g></svg><div class="ti" style="top:216px">基体-法兰1</div><div class="dot" style="left:13px;top:244px;width:9px;height:0;border-top-width:1px"></div><div class="ex" style="top:240px"></div><svg style="left:22px;top:234px" width="17" height="16" viewBox="0 0 17 16" ><path d="M1.500 4L3.500 1h11.500l.500.500V12.500l-2 3H2l-.500-.500z" fill="#f8e030" stroke="#000" stroke-width="1.200" stroke-linejoin="round"/><path d="M1.500 4L3.500 1h12l-2 3z" fill="#fff48c"/><path d="M13.500 4l2-3v11.500l-2 3z" fill="#c8a010"/><path d="M1.500 4h12l2-3M13.500 4v11.500" fill="none" stroke="#000" stroke-width=".900"/><path d="M1.500 4L3.500 1h11.500l.500.500V12.500l-2 3H2l-.500-.500z" fill="none" stroke="#000" stroke-width="1.200" stroke-linejoin="round"/><rect x="3.700" y="6" width="7.600" height="7.300" fill="#fbfbf4" stroke="#000" stroke-width="1"/><rect x="5.300" y="7.600" width="4.500" height="4.200" fill="#18a030" stroke="#063" stroke-width=".700"/><path d="M6.200 8.600h2.300v1.200" fill="none" stroke="#d8f8d8" stroke-width=".900"/></svg><div class="ti" style="top:234px">切除-拉伸1</div><div class="dot" style="left:13px;top:262px;width:9px;height:0;border-top-width:1px"></div><svg style="left:22px;top:252px" width="17" height="16" viewBox="0 0 17 16" ><path d="M2 8l6-6.500 6.500 6L8.500 14z" fill="none" stroke="#222" stroke-width="1.100"/><path d="M1 1.500l4 3.500M11.500 11l4 4" stroke="#222" stroke-width="1"/></svg><div class="ti" style="top:252px">基准面4</div><div class="dot" style="left:13px;top:280px;width:9px;height:0;border-top-width:1px"></div><div class="ex" style="top:276px"></div><svg style="left:22px;top:270px" width="17" height="16" viewBox="0 0 17 16" ><rect x="1" y="1" width="15.500" height="15" fill="#e8a020"/><path d="M1 1h15.500v3H5.500z" fill="#f8b838"/><path d="M8 8h8.500v8H8z" fill="#9aa4b8"/><path d="M8 8L1.500 1.500" stroke="#fff" stroke-width="1.300"/><path d="M4 4h12.500M4 4v12" stroke="#ffe8b0" stroke-width=".8"/><path d="M8 8h8.500M8 8v8" stroke="#e8ecf4" stroke-width="1"/></svg><div class="ti" style="top:270px">斜接法兰1</div><div class="dot" style="left:13px;top:298px;width:9px;height:0;border-top-width:1px"></div><div class="ex" style="top:294px"></div><svg style="left:22px;top:288px" width="17" height="16" viewBox="0 0 17 16" ><path d="M1.500 4L3.500 1h11.500l.500.500V12.500l-2 3H2l-.500-.500z" fill="#f8e030" stroke="#000" stroke-width="1.200" stroke-linejoin="round"/><path d="M1.500 4L3.500 1h12l-2 3z" fill="#fff48c"/><path d="M13.500 4l2-3v11.500l-2 3z" fill="#c8a010"/><path d="M1.500 4h12l2-3M13.500 4v11.500" fill="none" stroke="#000" stroke-width=".900"/><path d="M1.500 4L3.500 1h11.500l.500.500V12.500l-2 3H2l-.500-.500z" fill="none" stroke="#000" stroke-width="1.200" stroke-linejoin="round"/><rect x="3.700" y="6" width="7.600" height="7.300" fill="#fbfbf4" stroke="#000" stroke-width="1"/><rect x="5.300" y="7.600" width="4.500" height="4.200" fill="#18a030" stroke="#063" stroke-width=".700"/><path d="M6.200 8.600h2.300v1.200" fill="none" stroke="#d8f8d8" stroke-width=".900"/></svg><div class="ti" style="top:288px">切除-拉伸2</div><div class="dot" style="left:13px;top:316px;width:9px;height:0;border-top-width:1px"></div><div class="ex" style="top:312px"></div><svg style="left:22px;top:306px" width="17" height="16" viewBox="0 0 17 16" ><g transform="translate(-2.500 .800) scale(1)"><path d="M5.300 4.600l5.500-1.500 2.400 2.300v3.900L8 14.800l-2.700-2.400z" fill="#e89a18" stroke="#223" stroke-width="1" stroke-linejoin="round"/><path d="M5.300 4.600L8 7l5.200-1.600M8 7v7.800" fill="none" stroke="#223" stroke-width=".800"/><path d="M5.300 4.600L8 7l5.200-1.600-2.400-2.300z" fill="#f8c050" stroke="#223" stroke-width=".700"/><path d="M8 10.900l5.200-2.400 5.400.800v2.400l-5.400 3.100H8z" fill="#f6f6fa" stroke="#223" stroke-width="1" stroke-linejoin="round"/><path d="M8 12.500l5.200.200 5.400-3.400M13.200 12.700v2.100" fill="none" stroke="#223" stroke-width=".800"/><path d="M5.300 4.600V.300M3.600 2.300L5.300.300 7 2.300" fill="none" stroke="#1c2fb8" stroke-width="1.300"/></g></svg><div class="ti" style="top:306px">边线-法兰1</div><div class="dot" style="left:13px;top:334px;width:9px;height:0;border-top-width:1px"></div><div class="ex" style="top:330px"></div><svg style="left:22px;top:324px" width="17" height="16" viewBox="0 0 17 16" ><path d="M1.500 4L3.500 1h11.500l.500.500V12.500l-2 3H2l-.500-.500z" fill="#f8e030" stroke="#000" stroke-width="1.200" stroke-linejoin="round"/><path d="M1.500 4L3.500 1h12l-2 3z" fill="#fff48c"/><path d="M13.500 4l2-3v11.500l-2 3z" fill="#c8a010"/><path d="M1.500 4h12l2-3M13.500 4v11.500" fill="none" stroke="#000" stroke-width=".900"/><path d="M1.500 4L3.500 1h11.500l.500.500V12.500l-2 3H2l-.500-.500z" fill="none" stroke="#000" stroke-width="1.200" stroke-linejoin="round"/><circle cx="7.500" cy="9.700" r="4.200" fill="#189030" stroke="#000" stroke-width="1"/><circle cx="6.700" cy="9" r="2.400" fill="#eaffea"/><path d="M5 12.200a3.800 3.800 0 0 0 6-1.200" fill="none" stroke="#6d6" stroke-width="1"/></svg><div class="ti" style="top:324px">孔1</div><div class="dot" style="left:13px;top:352px;width:9px;height:0;border-top-width:1px"></div><div class="ex" style="top:348px"></div><svg style="left:22px;top:342px" width="17" height="16" viewBox="0 0 17 16" ><g transform="translate(-2.500 .800) scale(1)"><path d="M5.300 4.600l5.500-1.500 2.400 2.300v3.900L8 14.800l-2.700-2.400z" fill="#e89a18" stroke="#223" stroke-width="1" stroke-linejoin="round"/><path d="M5.300 4.600L8 7l5.200-1.600M8 7v7.800" fill="none" stroke="#223" stroke-width=".800"/><path d="M5.300 4.600L8 7l5.200-1.600-2.400-2.300z" fill="#f8c050" stroke="#223" stroke-width=".700"/><path d="M8 10.900l5.200-2.400 5.400.800v2.400l-5.400 3.100H8z" fill="#f6f6fa" stroke="#223" stroke-width="1" stroke-linejoin="round"/><path d="M8 12.500l5.200.200 5.400-3.400M13.200 12.700v2.100" fill="none" stroke="#223" stroke-width=".800"/><path d="M5.300 4.600V.300M3.600 2.300L5.300.300 7 2.300" fill="none" stroke="#1c2fb8" stroke-width="1.300"/></g></svg><div class="ti" style="top:342px">边线-法兰2</div><div class="dot" style="left:13px;top:370px;width:9px;height:0;border-top-width:1px"></div><div class="ex" style="top:366px"></div><svg style="left:22px;top:360px" width="17" height="16" viewBox="0 0 17 16" ><path d="M1.500 4L3.500 1h11.500l.500.500V12.500l-2 3H2l-.500-.500z" fill="#f8e030" stroke="#000" stroke-width="1.200" stroke-linejoin="round"/><path d="M1.500 4L3.500 1h12l-2 3z" fill="#fff48c"/><path d="M13.500 4l2-3v11.500l-2 3z" fill="#c8a010"/><path d="M1.500 4h12l2-3M13.500 4v11.500" fill="none" stroke="#000" stroke-width=".900"/><path d="M1.500 4L3.500 1h11.500l.500.500V12.500l-2 3H2l-.500-.500z" fill="none" stroke="#000" stroke-width="1.200" stroke-linejoin="round"/><circle cx="7.500" cy="9.700" r="4.200" fill="#189030" stroke="#000" stroke-width="1"/><circle cx="6.700" cy="9" r="2.400" fill="#eaffea"/><path d="M5 12.200a3.800 3.800 0 0 0 6-1.200" fill="none" stroke="#6d6" stroke-width="1"/></svg><div class="ti" style="top:360px">孔2</div><div class="dot" style="left:13px;top:388px;width:9px;height:0;border-top-width:1px"></div><div class="ex" style="top:384px"></div><svg style="left:22px;top:378px" width="17" height="16" viewBox="0 0 17 16" ><path d="M1.500 4L3.500 1h11.500l.500.500V12.500l-2 3H2l-.500-.500z" fill="#3a9af0" stroke="#0a2a6a" stroke-width="1.200" stroke-linejoin="round"/><path d="M1.500 4L3.500 1h12l-2 3z" fill="#9ad0ff"/><path d="M13.500 4l2-3v11.500l-2 3z" fill="#1a5ab8"/><path d="M1.500 4h12l2-3M13.500 4v11.500" fill="none" stroke="#0a2a6a" stroke-width=".900"/><path d="M1.500 4L3.500 1h11.500l.500.500V12.500l-2 3H2l-.500-.500z" fill="none" stroke="#0a2a6a" stroke-width="1.200" stroke-linejoin="round"/><rect x="3.700" y="6" width="7.600" height="7.300" fill="#fbfbf4" stroke="#0a2a6a" stroke-width="1"/><rect x="5.300" y="7.600" width="4.500" height="4.200" fill="#2a5ad8" stroke="#013" stroke-width=".700"/><path d="M6.200 8.600h2.300v1.200" fill="none" stroke="#d8e8ff" stroke-width=".900"/></svg><div class="ti" style="top:378px;background:#316ac5;color:#fff;height:14px;line-height:14px;margin-top:1px">切除-拉伸3</div><div class="dot" style="left:13px;top:406px;width:9px;height:0;border-top-width:1px"></div><div class="ex" style="top:402px"></div><svg style="left:22px;top:396px" width="17" height="16" viewBox="0 0 17 16" ><path d="M1 3l3-2 9 0 3.500 10-2 4H4.500z" fill="#b8bcc4" stroke="#8a8e98" stroke-width=".9"/><path d="M4 1l3 10h9.500M7 11l-2.500 4" fill="none" stroke="#e8eaee" stroke-width="1"/><path d="M4.500 15h10l2-4" fill="none" stroke="#70747c" stroke-width="1.200"/></svg><div class="ti" style="top:396px;color:#8a8e96">平板型式1</div><div class="a" style="left:1px;top:413px;width:186px;height:3px;background:linear-gradient(#f0e020 0,#f0e020 66%,#222 66%)"></div></div></div><style>
#vp{left:200px;top:122px;width:784px;height:581px;border-left:1px solid #0a0a14;border-top:1px solid #0a0a14;background:linear-gradient(#5bb7fb 0,#62bafa 10%,#8fcaf4 45%,#c4dcec 75%,#e2e6ea 100%);overflow:hidden}
.sbv{left:984px;top:123px;width:15px;height:579px;background:linear-gradient(90deg,#ccd2dc 0,#e6e9ef 20%,#f4f5f8 55%,#e0e4eb 85%,#c4cad6 100%)}
.sbh{left:201px;top:703px;width:782px;height:15px;background:linear-gradient(#c8ced9 0,#e6e9ef 22%,#f6f7fa 50%,#e2e6ec 80%,#c0c7d3 100%)}
</style><div id="vp" class="a"></div><svg style="left:201px;top:123px" width="783" height="580" viewBox="201 123 783 580" shape-rendering="crispEdges"><defs><filter id="bl" x="-20%" y="-20%" width="140%" height="140%"><feGaussianBlur stdDeviation="5"/></filter></defs><polygon points="435,269.5 437.5,265.5 441,263.6 448.3,263.3 694,271.6 706.5,272.7 710,274.5 711.25,278 729.5,350 759.2,470 773,520 778.4,545 778.4,551 761,596.5 759,603 756,606.5 751.9,608.3 662,615.3 630,618 595,621.25 517,628.3 507.5,628.3 501.25,627.5 494,623 490.3,616.5 471.5,540 451.7,460 428.75,368.75 435.8,347.7 424.8,304.7 423.3,300" fill="#1c4470" opacity=".85" filter="url(#bl)" transform="translate(10,-7)"/><polygon points="435,269.5 437.5,265.5 441,263.6 448.3,263.3 694,271.6 706.5,272.7 710,274.5 711.25,278 729.5,350 759.2,470 773,520 778.4,545 778.4,551 761,596.5 759,603 756,606.5 751.9,608.3 662,615.3 630,618 595,621.25 517,628.3 507.5,628.3 501.25,627.5 494,623 490.3,616.5 471.5,540 451.7,460 428.75,368.75 435.8,347.7 424.8,304.7 423.3,300" fill="#c7c7cb" stroke="#0c0c10" stroke-width="1.3" stroke-linejoin="round" /><polygon points="448.3,268.75 698.75,277.8 690,309.4 697,348 691.7,363.3 718.6,470 731.5,520 738.6,548.4 630,557.5 523,566.5 499,470 468.6,350 456,300" fill="#c1c1c5" stroke="#0c0c10" stroke-width="1.1" stroke-linejoin="round" /><polygon points="443.6,271.9 434.2,297.5 451.8,300.6" fill="#d2d2f6" stroke="#0c0c10" stroke-width="1" stroke-linejoin="round" /><polygon points="444.4,269.8 448.3,268.75 456,300.8 452.2,300.6" fill="#f6f6f8" stroke="#0c0c10" stroke-width="1" stroke-linejoin="round" /><polyline points="423.3,300 434.2,300.8" fill="none" stroke="#0c0c10" stroke-width="1" stroke-linejoin="round" stroke-linecap="round" /><polygon points="444.4,350 464,349.5 494.4,470 519.5,569 502,617.3 492.3,580 464,470 438,368.75" fill="#d2d2f6" stroke="#0c0c10" stroke-width="1" stroke-linejoin="round" /><polygon points="464,349.5 468.6,349.3 499,470 523,566.5 520,569.5 494.4,470" fill="#f6f6f8" stroke="#0c0c10" stroke-width="1" stroke-linejoin="round" /><polyline points="428.75,368.75 438,368.75" fill="none" stroke="#0c0c10" stroke-width="1" stroke-linejoin="round" stroke-linecap="round" /><polyline points="435.8,347.7 444.4,350" fill="none" stroke="#0c0c10" stroke-width="1" stroke-linejoin="round" stroke-linecap="round" /><polygon points="434.2,300.8 467,301.6 477.2,339.8 475.6,347.7 444.4,350 435.8,347.7 424.8,304.7" fill="#c7c7cb" stroke="#0c0c10" stroke-width="1.1" stroke-linejoin="round" /><polygon points="435,305.5 465.5,306.25 474.8,346.9 444.4,349.6" fill="#c1c1c5" stroke="#0c0c10" stroke-width="1.1" stroke-linejoin="round" /><polyline points="434.2,300.8 435,305.5" fill="none" stroke="#0c0c10" stroke-width="1" stroke-linejoin="round" stroke-linecap="round" /><polyline points="467,301.6 465.5,306.25" fill="none" stroke="#0c0c10" stroke-width="1" stroke-linejoin="round" stroke-linecap="round" /><polyline points="424.8,304.7 435,305.5" fill="none" stroke="#0c0c10" stroke-width="1" stroke-linejoin="round" stroke-linecap="round" /><ellipse cx="453.200" cy="327" rx="10.300" ry="8.900" transform="rotate(22 453.200 327)" fill="#bcbcc0" stroke="#0c0c10" stroke-width="1.100"/><path d="M444.200 322.300c1.500-3.500 6-5 10.500-3.500 4 1.300 7 5 7.500 9.800-3.500 2.200-7.800 1.700-11.500-.800-3-2-5-3.800-6.500-5.500z" fill="#d2d2f4" stroke="#0c0c10" stroke-width="1"/><path d="M458.300 321l3.900 7.600c-1 .800-2.400 1.200-3.900 1.200z" fill="#f6f6fa" stroke="#0c0c10" stroke-width=".900"/><polygon points="467,301.6 477.2,339.8 475.6,347.7 474.8,346.9 465.5,306.25" fill="#d8d8f6" stroke="#0c0c10" stroke-width="1" stroke-linejoin="round" /><polygon points="699.5,278 711.25,280.5 700.9,307.8 691.1,308.2" fill="#c7c7cb" stroke="#0c0c10" stroke-width="1.1" stroke-linejoin="round" /><polygon points="706.5,272.7 711.25,278 711.25,280.5 699.5,278 698.75,277.8 699.5,274" fill="#c7c7cb" stroke="#0c0c10" stroke-width="1" stroke-linejoin="round" /><polygon points="711.25,280.5 729.5,350 759.2,470 773,520 778.4,545 778.4,551 761,596.5 759.7,595 741.7,520 728.75,470 701.9,362.5 709.8,340.6 710.6,339.8 709.8,334.4 700.9,307.8" fill="#d2d2f6" stroke="#0c0c10" stroke-width="1.2" stroke-linejoin="round" /><polygon points="692,363.3 701.9,362.5 728.75,470 741.7,520 759.7,595 749.5,596.5 731.5,520 718.6,470" fill="#c7c7cb" stroke="#0c0c10" stroke-width="1" stroke-linejoin="round" /><polygon points="698.1,346.1 707.5,339.8 709.8,340.6 701.9,362.5 692,363.3" fill="#c7c7cb" stroke="#0c0c10" stroke-width="1" stroke-linejoin="round" /><polygon points="654.8,316.8 656.7,314 685.6,310.9 691.9,308.2 700.9,307.8 709.8,334.4 710.6,339.8 707.5,339.8 698.1,346.1 691.9,345.7 661.4,348" fill="#c7c7cb" stroke="#0c0c10" stroke-width="1.1" stroke-linejoin="round" /><defs><linearGradient id="bend" x1="0" x2="1" y1=".15" y2="0"><stop offset="0" stop-color="#cfcfd4"/><stop offset=".55" stop-color="#fdfdfe"/><stop offset="1" stop-color="#d4d4da"/></linearGradient></defs><path d="M684.800 316q9-1 16.100-7.800l8.900 28.500-2.300 3.100q-7 4.800-15.600 5.900z" fill="url(#bend)" stroke="#0c0c10" stroke-width="1.100"/><polygon points="654.4,318.4 684.8,316 691.9,345.7 661.4,348" fill="#c1c1c5" stroke="#0c0c10" stroke-width="1.1" stroke-linejoin="round" /><polyline points="685.6,310.9 684.8,316" fill="none" stroke="#0c0c10" stroke-width="1" stroke-linejoin="round" stroke-linecap="round" /><ellipse cx="675.100" cy="332.400" rx="8.800" ry="7" transform="rotate(10 675.100 332.400)" fill="#cdcdde" stroke="#0c0c10" stroke-width="1.100"/><path d="M669.200 328.500c1-2.500 4-3.500 7.500-3 3.500.500 6 2.800 6.300 6.300-2.500 1.800-6 1.800-9 .200-2.300-1.200-3.800-2.300-4.800-3.500z" fill="#c1c1c5" stroke="#0c0c10" stroke-width="1"/><polygon points="524,571.25 739.4,553 749.5,596.5 750.3,607.8 662,615.3 630,618 595,621.25 507.5,627.8 505,619.4" fill="#c7c7cb" stroke="#0c0c10" stroke-width="1" stroke-linejoin="round" /><polygon points="523,566.5 630,557.5 738.6,548.4 739.4,553 630,562.2 524,571.25" fill="#fbfbfc" stroke="#0c0c10" stroke-width="1" stroke-linejoin="round" /><polygon points="505,619.4 592.6,612 595,621.25 507.5,627.8" fill="#bdbdc1" stroke="#0c0c10" stroke-width="1" stroke-linejoin="round" /><polygon points="592.6,612 660.5,606.7 662,615.3 595,621.25" fill="#bdbdc1" stroke="#0c0c10" stroke-width="1" stroke-linejoin="round" /><polygon points="662,606 749.5,599 750.3,607.8 662,615.3" fill="#bdbdc1" stroke="#0c0c10" stroke-width="1" stroke-linejoin="round" /><polyline points="524,572 592.6,612" fill="none" stroke="#0c0c10" stroke-width="1.3" stroke-linejoin="round" stroke-linecap="round" /><polyline points="741.7,564.5 662,606" fill="none" stroke="#0c0c10" stroke-width="1.2" stroke-linejoin="round" stroke-linecap="round" /><polygon points="519.5,571 523.5,572 505,619.4 502,617.3" fill="#c7c7cb" stroke="#0c0c10" stroke-width="0.9" stroke-linejoin="round" /><polyline points="490.3,616.5 502,617.3 505,619.4" fill="none" stroke="#0c0c10" stroke-width="1" stroke-linejoin="round" stroke-linecap="round" /><polyline points="492.3,580 502,617.3" fill="none" stroke="#0c0c10" stroke-width="1" stroke-linejoin="round" stroke-linecap="round" /><polyline points="749.5,596.5 759.7,595" fill="none" stroke="#0c0c10" stroke-width="1" stroke-linejoin="round" stroke-linecap="round" /><polyline points="776.6,549.5 759.7,595" fill="none" stroke="#0c0c10" stroke-width="1" stroke-linejoin="round" stroke-linecap="round" /><polyline points="434.5,270.7 444.7,270.7 448.6,268.75" fill="none" stroke="#0c0c10" stroke-width="1" stroke-linejoin="round" stroke-linecap="round" /><polyline points="449.4,264 448.6,268.75" fill="none" stroke="#0c0c10" stroke-width="1" stroke-linejoin="round" stroke-linecap="round" /><path d="M434.900 270.700c.300-3 1.200-5 3.100-6.300 2.500-1.500 6-1.300 10.600-1.100" fill="none" stroke="#1414e0" stroke-width="1.600"/><path d="M433 260l6 5M439 260l-6 5M436 259v7M431.800 276.500l-1 3 2-1.500zM434.500 270l-3 7" fill="none" stroke="#1414e0" stroke-width="1.100"/></svg><svg style="left:201px;top:123px" width="783" height="580" viewBox="201 123 783 580"><path d="M240.500 643l-7 13" stroke="#1e7a2a" stroke-width="4.500"/><path d="M228 652.500l10.500 4.500-7 5z" fill="#1e7a2a"/><path d="M240.500 643l4 18" stroke="#1a1ac0" stroke-width="4.500"/><path d="M239.500 659.500l9.500-2-3.500 10z" fill="#1a1ac0"/><path d="M240 643.500l20-2" stroke="#d82020" stroke-width="3"/><path d="M259 637.500l9 3.500-8.500 4z" fill="#d82020"/><text x="267.500" y="645" font-family="Liberation Serif,serif" font-weight="bold" font-size="9" fill="#d82020">X</text><text x="229" y="666.500" font-family="Liberation Serif,serif" font-weight="bold" font-size="9" fill="#2a8a3a">Y</text><text x="242.500" y="677" font-family="Liberation Serif,serif" font-weight="bold" font-size="9" fill="#1a1ac0">Z</text></svg><div class="a" style="left:201px;top:683px;width:121px;height:19px;border:1px solid #111;background:#f1f1c4"></div><div class="a" style="left:309px;top:684px;width:1px;height:17px;background:#111"></div><div class="t" style="left:223px;top:687px;font-size:10px;line-height:13px;letter-spacing:.4px">自定义</div><div class="a" style="left:312px;top:691px;border:3px solid transparent;border-top:3px solid #111;border-bottom:0;width:0;height:0"></div><div class="a sbv"></div><div class="a" style="left:983px;top:122px;width:16px;height:8px;border:1px solid #111;border-left:0;background:#f4f6f8"></div><div class="a" style="left:984px;top:130px;width:15px;height:15px;background:linear-gradient(#e9edf3,#d8dee8);border-bottom:1px solid #c0c8d4"></div><div class="a" style="left:984px;top:686px;width:15px;height:15px;background:linear-gradient(#f4f6f9,#dde2ea);border-top:1px solid #c4ccd8"></div><div class="a sbh"></div><div class="a" style="left:200px;top:702px;width:8px;height:16px;border:1px solid #111;background:#f4f6f8"></div><div class="a" style="left:208px;top:703px;width:16px;height:15px;background:linear-gradient(#e4e8ee,#f2f4f8 50%,#d8dde6)"></div><div class="a" style="left:967px;top:703px;width:16px;height:15px;background:linear-gradient(#e4e8ee,#f6f8fa 50%,#d8dde6);border-left:1px solid #c8d0da"></div><div class="a" style="left:983px;top:702px;width:17px;height:17px;background:#e4e8f0"></div><div class="a" style="left:988px;top:135px;border:3.500px solid transparent;border-bottom:5px solid #c2c8d2;border-top:0;width:0;height:0"></div><div class="a" style="left:988px;top:691px;border:3.500px solid transparent;border-top:5px solid #c2c8d2;border-bottom:0;width:0;height:0"></div><div class="a" style="left:213px;top:707px;border:3.500px solid transparent;border-right:5px solid #c2c8d2;border-left:0;width:0;height:0"></div><div class="a" style="left:973px;top:707px;border:3.500px solid transparent;border-left:5px solid #c2c8d2;border-right:0;width:0;height:0"></div><div class="a" style="left:999px;top:122px;width:1px;height:597px;background:#f6f8fb"></div><div class="a" style="left:1000px;top:122px;width:24px;height:597px;background:#e6eaf1"></div><div class="a" style="left:1000px;top:148px;width:22px;height:27px;background:#fff;border-right:2px solid #f0a030;border-radius:0 4px 4px 0"></div><div class="a" style="left:1000px;top:176px;width:21px;height:26px;background:linear-gradient(90deg,#f0f2f6,#e2e6ee);border:1px solid #c4ccd8;border-left:0;border-radius:0 3px 3px 0"></div><div class="a" style="left:1000px;top:203px;width:21px;height:26px;background:linear-gradient(90deg,#f0f2f6,#e2e6ee);border:1px solid #c4ccd8;border-left:0;border-radius:0 3px 3px 0"></div><svg style="left:1002px;top:155px" width="15" height="15" viewBox="0 0 16 16" ><path d="M1 8l7-6.500L15 8" fill="none" stroke="#111" stroke-width="1.500"/><path d="M3 7.500V15h10V7.500L8 3z" fill="#fffbe4" stroke="#111" stroke-width="1"/><rect x="6.500" y="10" width="3" height="5" fill="#f0c020" stroke="#111" stroke-width=".7"/><rect x="11" y="1" width="2" height="4" fill="#e02020"/></svg><svg style="left:1001px;top:180px" width="16" height="16" viewBox="0 0 16 16" ><path d="M1 9l2.500-2 2 1v7l-2.500 1.500-2-1z" fill="#28a838" stroke="#111" stroke-width=".8"/><path d="M5.500 6l2.500-2 2 1v10l-2.500 1.500-2-1z" fill="#f0d020" stroke="#111" stroke-width=".8"/><path d="M10 3l2.500-2 2 1v12l-2.500 1.500-2-1z" fill="#5a8ae8" stroke="#111" stroke-width=".8"/><path d="M5 2.500l-2 3M6.500 1.500l3 1" stroke="#c02020" stroke-width="1"/></svg><svg style="left:1001px;top:205.5px" width="17" height="17" viewBox="0 0 16 16" ><path d="M1 2.500h5l1.500 1.500H14V11H1z" fill="#f4d060" stroke="#8a6a10" stroke-width=".8"/><circle cx="8.500" cy="10" r="3.500" fill="#d4ecfb" stroke="#a08030" stroke-width="1.200"/><path d="M11 12.500l3.500 3.500" stroke="#c89830" stroke-width="1.800" stroke-linecap="round"/></svg><div class="a" style="left:1003px;top:232px;width:16px;height:16px;border:1px solid #a8b0cc;border-radius:8px;background:#f4f6fb"></div><svg style="left:1003px;top:232px" width="16" height="16" viewBox="0 0 16 16" ><path d="M7.500 4.200L4 8l3.500 3.800M11.500 4.200L8 8l3.500 3.800" fill="none" stroke="#1c3480" stroke-width="1.300"/></svg><div class="a" style="left:1003px;top:628px;width:16px;height:16px;border:1px solid #a8b0cc;border-radius:8px;background:#f4f6fb"></div><svg style="left:1003px;top:628px" width="16" height="16" viewBox="0 0 16 16" ><path d="M7.500 4.200L4 8l3.500 3.800M11.500 4.200L8 8l3.500 3.800" fill="none" stroke="#1c3480" stroke-width="1.300"/></svg><div class="a" style="left:1008px;top:258px;width:6px;height:364px;border-left:1px solid #f8fafc;border-right:1px solid #f8fafc"></div><style>
#sb{left:0;top:718px;width:1024px;height:19px;background:linear-gradient(#f8f9fb 0,#f8f9fb 1px,#d4d7dc 1px,#e4e6ea 6px,#f6f7f9 13px,#fff 19px)}
#sb .t{top:4.500px;line-height:15px}
#sb i{position:absolute;top:3px;width:2px;height:15px;border-left:1px solid #d0d4da;border-right:1px solid #fafbfc}
#tk{left:0;top:737px;width:1024px;height:31px;background:linear-gradient(#fbfcfe 0,#e4e9f4 2px,#d2daea 6px,#d6ddec 16px,#c4cee2 26px,#b4c0d8 31px)}
.tbn{position:absolute;top:3px;height:26px;border-radius:5px;border:1px solid #3a66a8;background:linear-gradient(#9cc4f0 0,#6ea6e4 3px,#4a8ad6 10px,#4682d0 16px,#5a96dc 22px,#7ab0e8 26px);color:#fff;box-shadow:0 1px 1px rgba(255,255,255,.6)}
.tbn .t{top:4px;line-height:16px;text-shadow:0 0 1px #1a3a70}
</style><div id="sb" class="a"><div class="t" style="left:2px">就绪</div><div class="t" style="left:693px">长度: 72.67mm</div><div class="t" style="left:779px">欠定义</div><div class="t" style="left:832px">正在编辑：零件</div><i style="left:689px"></i><i style="left:775px"></i><i style="left:826px"></i><i style="left:922px"></i><i style="left:929px"></i><i style="left:952px"></i><i style="left:981px"></i><i style="left:1017px"></i><div class="a" style="left:963px;top:4px;width:14px;height:13px;background:#f4f4c8;border-top:2px solid #4a78c0;box-shadow:1px 1px 0 #b8b890"></div><div class="t" style="left:966px;top:4px;font:bold 12px/14px 'Liberation Sans',sans-serif;color:#188a18">?</div></div><div id="tk" class="a"><div class="a" style="left:2px;top:1px;width:88px;height:28px;border-radius:12px 14px 14px 12px/14px;border:1px solid #3a6ab4;background:linear-gradient(#a4c8f0 0,#78aee6 4px,#5a96dc 12px,#5490d8 18px,#7cb2ea 25px,#a4ccf4 28px);box-shadow:0 0 2px #5a80b8"></div><svg style="left:11px;top:5px" width="20" height="20" viewBox="-1.500 1 17.500 17" ><path d="M2 3c2-1.500 4-1.500 6 0l-1.500 6c-2-1.500-4-1.500-6 0z" fill="#f06828"/><path d="M9 3.300c2 1.200 4 1.200 6-.3l-1.500 6c-2 1.500-4 1.500-6 .3z" fill="#48b038"/><path d="M.3 10.500c2-1.500 4-1.500 6 0L4.800 16.500c-2-1.500-4-1.500-6 0z" fill="#3a70d8"/><path d="M7.200 10.800c2 1.200 4 1.200 6-.3l-1.500 6c-2 1.500-4 1.500-6 .3z" fill="#f8c820"/></svg><div class="t" style="left:34px;top:5px;font:italic bold 17px/19px 'Liberation Sans',sans-serif;color:#fff;text-shadow:1px 1px 2px #2a4a88">Start</div><div class="a" style="left:103px;top:3px;width:24px;height:25px;border-radius:5px;border:1px solid #5a86c4;background:linear-gradient(#4584d2 0,#5a96dc 35%,#8ab6ea 70%,#cbdef6 100%)"></div><div class="a" style="left:130px;top:3px;width:24px;height:25px;border-radius:5px;border:1px solid #5a86c4;background:linear-gradient(#4584d2 0,#5a96dc 35%,#8ab6ea 70%,#cbdef6 100%)"></div><svg style="left:106px;top:6px" width="18" height="18" viewBox="0 0 18 18" ><path d="M14.200 12.500A5.800 5.800 0 1 1 15 9.300H5" fill="none" stroke="#bfe2ff" stroke-width="4.400"/><path d="M14.200 12.500A5.800 5.800 0 1 1 15 9.300H5" fill="none" stroke="#1b66c9" stroke-width="3"/><path d="M6 7.500c1-2 4-2.500 5.500-.500" fill="none" stroke="#6ab4f4" stroke-width="1"/><path d="M1.800 14.500C.500 10 8.500 2.500 16.200 3.200" fill="none" stroke="#f2c024" stroke-width="1.500"/></svg><svg style="left:133px;top:6px" width="18" height="18" viewBox="0 0 18 18" ><path d="M3 5l2-2.500h9l2 2v8l-2 2.500H5l-2-2z" fill="#fff" stroke="#143c86" stroke-width="1.300" stroke-linejoin="round"/><path d="M12 6H8.500C7 6 6.200 7 6.200 9s.800 3 2.300 3H12M7 9h4.500" fill="none" stroke="#143c86" stroke-width="1.700"/><path d="M11.500 9l5-4.500M13.500 4h3.500v3" fill="none" stroke="#d83030" stroke-width="1.100"/></svg><div class="tbn" style="left:165px;width:153px;border-color:#e08a30;background:linear-gradient(#f4a456 0,#fbcc88 3px,#fdeabc 10px,#fcdc98 17px,#f9c468 23px,#f6b050 26px)"><div class="t" style="left:29px;font-size:11px;color:#fffee0;text-shadow:0 0 1px #a85c08,0 0 2px #b06410,1px 1px 1px #b87020">SolidWorks 2006 - [...</div></div><svg style="left:175px;top:5px" width="17" height="17" viewBox="0 0 16 16" ><path d="M.500 3.300L6.900.900l8 1.800-.300 9.400-7.100 3.300-7-3.300z" fill="#c81c14"/><path d="M.500 3.300L6.900.900l8 1.800-6.800 2.400z" fill="#ec6a58"/><path d="M8.100 5.100l6.800-2.400-.300 9.400-7.100 3.300z" fill="#a01410"/><path d="M.500 3.300l7.600 1.800-.600 10.300-7-3.300z" fill="#d4241a"/><text x="1.300" y="12.600" font-family="Liberation Sans,sans-serif" font-weight="bold" font-size="10.500" textLength="5.400" lengthAdjust="spacingAndGlyphs" fill="#fff">S</text><text x="8.300" y="12" font-family="Liberation Sans,sans-serif" font-weight="bold" font-size="9.500" textLength="6.200" lengthAdjust="spacingAndGlyphs" fill="#f4e4e0">W</text></svg><div class="tbn" style="left:325px;width:153px"><div class="t" style="left:27px">用钣金怎么画这个...</div></div><svg style="left:332px;top:6px" width="17" height="17" viewBox="0 0 18 18" ><path d="M14.200 12.500A5.800 5.800 0 1 1 15 9.300H5" fill="none" stroke="#bfe2ff" stroke-width="4.400"/><path d="M14.200 12.500A5.800 5.800 0 1 1 15 9.300H5" fill="none" stroke="#1b66c9" stroke-width="3"/><path d="M6 7.500c1-2 4-2.500 5.500-.500" fill="none" stroke="#6ab4f4" stroke-width="1"/><path d="M1.800 14.500C.500 10 8.500 2.500 16.200 3.200" fill="none" stroke="#f2c024" stroke-width="1.500"/></svg><div class="tbn" style="left:485px;width:153px"><div class="t" style="left:28px">在线指导教程</div></div><svg style="left:494px;top:6px" width="16" height="16" viewBox="0 0 16 16" ><path d="M1.500 4.500h8V15h-8z" fill="#fff" stroke="#222" stroke-width="1"/><path d="M3 8h4.500M3 10h4.500M3 12h4.500" stroke="#555" stroke-width=".9"/><text x="6.500" y="10" font-family="Liberation Sans,sans-serif" font-weight="bold" font-size="12" fill="#f8d020" stroke="#222" stroke-width=".7">?</text></svg><div class="a" style="left:940px;top:0;width:84px;height:31px;background:none"></div><div class="a" style="left:944px;top:0;width:80px;height:31px;background:linear-gradient(#3d7cd0 0,#4a88d6 8px,#5f99de 18px,#80b2ea 28px,#8fbcee 31px)"></div><div class="a" style="left:940px;top:0;width:6px;height:31px;background:linear-gradient(90deg,#dfe6f2,#a8c4ea)"></div><div class="a" style="left:887px;top:4px;width:22px;height:24px;border-radius:5px;border:1px solid #4a78bc;background:linear-gradient(#a8ccf2,#5c98de 45%,#4c88d2 60%,#8cbcee)"></div><svg style="left:890px;top:7px" width="16" height="18" viewBox="0 0 16 18" ><path d="M3 2.500c1-1.500 2 1 3 0s2 1 3 0 2 1 3 0" fill="none" stroke="#123" stroke-width=".9"/><rect x="1" y="6" width="14" height="10" rx="1.500" fill="#f4f6fa" stroke="#123" stroke-width="1"/><path d="M3 8.500h10M3 10.500h10M3 12.500h10" stroke="#345" stroke-width="1.200" stroke-dasharray="1.200 .8"/><path d="M4 14.500h8" stroke="#345" stroke-width="1"/></svg><div class="a" style="left:921px;top:6px;width:18px;height:18px;border-radius:9px;border:1px solid #b4bccc;background:radial-gradient(circle at 50% 35%,#fff,#d4dae6);box-shadow:0 0 2px #fff"></div><div class="a" style="left:925px;top:11px;border:4px solid transparent;border-right:6px solid #2a3444;border-left:0;width:0;height:0"></div><svg style="left:965px;top:8px" width="15" height="15" viewBox="0 0 15 15" ><path d="M1 0h3.500v14H1z" fill="#e01818"/><path d="M4.500 8L10 0h4L8 8.500z" fill="#e01818"/><path d="M5 8l3 .5 6.500 5.500-2 .8-2-2-1.500 1.500-3-4z" fill="#101010"/><path d="M10 14.500h4.500V10z" fill="#101010"/></svg><div class="t" style="left:988px;top:9px;color:#fff;font-size:11.500px;line-height:14px">13:14</div></div></body></html>
